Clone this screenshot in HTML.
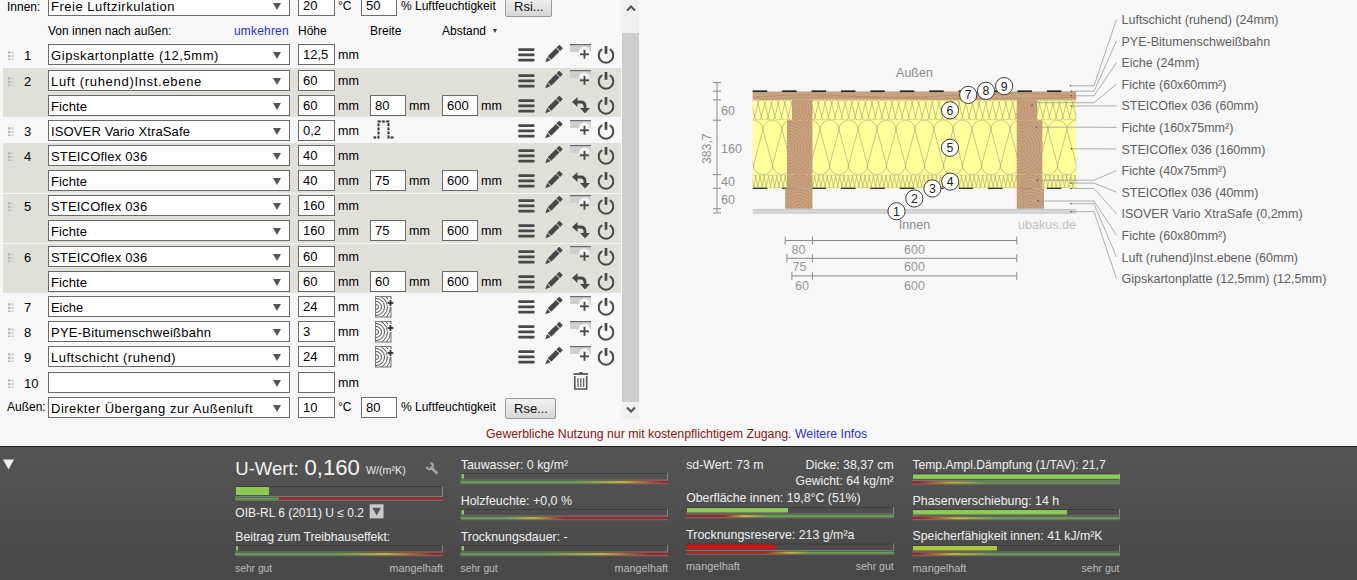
<!DOCTYPE html><html><head><meta charset="utf-8"><style>
*{box-sizing:border-box}
html,body{margin:0;padding:0}
body{width:1357px;height:580px;overflow:hidden;position:relative;background:#f7f7f7;font-family:"Liberation Sans",sans-serif;color:#000}
.a{position:absolute;white-space:nowrap}
.t{position:absolute;white-space:nowrap;font-size:12px;line-height:14px}
.sel{position:absolute;left:48px;width:242px;height:21px;background:#fff;border:1px solid #6b6b6b;font-size:13px;line-height:20px;padding-top:1px;padding-left:2px;white-space:nowrap;overflow:hidden}
.sel:after{content:"";position:absolute;left:224px;top:7px;border-left:4px solid transparent;border-right:4px solid transparent;border-top:7px solid #555}
.inp{position:absolute;height:21px;background:#fff;border:1px solid #6b6b6b;font-size:13px;line-height:19px;padding-left:4px;white-space:nowrap}
.band{position:absolute;left:3px;width:618px;background:#e0dfd8}
.num{position:absolute;font-size:13px;line-height:15px}
.btn{position:absolute;height:21px;border:1px solid #9a9a9a;border-radius:2px;background:linear-gradient(#f2f2f2,#d6d6d6);font-size:13px;line-height:19px;padding-left:8px;color:#111}
.lbl{position:absolute;white-space:nowrap;font-size:12.65px;line-height:14px;color:#5c5c5c}
.pt{position:absolute;white-space:nowrap;color:#efefef;font-size:12.3px;line-height:14px}
.sm{position:absolute;white-space:nowrap;color:#b8b8b8;font-size:10.6px;line-height:12px}
</style></head><body>
<div class="band" style="top:68px;height:49px"></div><div class="band" style="top:143px;height:50px"></div><div class="band" style="top:194px;height:49px"></div><div class="band" style="top:244px;height:49px"></div><div class="t" style="left:7px;top:0px">Innen:</div><div class="sel" style="top:-5px;letter-spacing:0.503px">Freie Luftzirkulation</div><div class="inp" style="left:298px;top:-5px;width:37px">20</div><div class="t" style="left:338px;top:-1px;">°C</div><div class="inp" style="left:361px;top:-5px;width:36px">50</div><div class="t" style="left:401px;top:-1px;">% Luftfeuchtigkeit</div><div class="btn" style="left:505px;top:-4px;width:47px">Rsi...</div><div class="t" style="left:48px;top:24px;">Von innen nach außen:</div><div class="t" style="left:234px;top:24px;color:#2233d8;letter-spacing:0.18px">umkehren</div><div class="t" style="left:298px;top:24px;">Höhe</div><div class="t" style="left:370px;top:24px;">Breite</div><div class="t" style="left:442px;top:24px;">Abstand</div><div class="a" style="left:493px;top:29px;border-left:2.5px solid transparent;border-right:2.5px solid transparent;border-top:4px solid #333"></div><svg class="a" style="left:7px;top:51px" width="8" height="9" viewBox="0 0 8 9"><rect x="1" y="0.3" width="2.5" height="2.2" fill="#b4b4b4"/><rect x="4.5" y="0.3" width="2.5" height="2.2" fill="#d2d2d2"/><rect x="1" y="3.9" width="2.5" height="2.2" fill="#b4b4b4"/><rect x="4.5" y="3.9" width="2.5" height="2.2" fill="#d2d2d2"/><rect x="1" y="7.5" width="2.5" height="2.2" fill="#b4b4b4"/><rect x="4.5" y="7.5" width="2.5" height="2.2" fill="#d2d2d2"/></svg><div class="num" style="left:24px;top:48px">1</div><div class="sel" style="top:44px;letter-spacing:0.565px">Gipskartonplatte (12,5mm)</div><div class="inp" style="left:298px;top:44px;width:37px">12,5</div><div class="t" style="left:338px;top:48px;font-size:12.5px">mm</div><svg class="a" style="left:518px;top:48px" width="17" height="14" viewBox="0 0 17 14"><g fill="#484848"><rect x="0.3" y="0.2" width="16.2" height="2.7" rx="0.8"/><rect x="0.3" y="5.5" width="16.2" height="2.7" rx="0.8"/><rect x="0.3" y="10.8" width="16.2" height="2.7" rx="0.8"/></g></svg><svg class="a" style="left:545px;top:45px" width="18" height="18" viewBox="0 0 18 18"><g transform="translate(0.3 17.2) rotate(-45)" fill="#484848"><path d="M0 0 L5 -2.4 L5 2.4 Z"/><rect x="5.9" y="-2.5" width="11.6" height="5"/><rect x="18.4" y="-2.5" width="3.9" height="5"/></g></svg><svg class="a" style="left:570px;top:44px" width="22" height="16" viewBox="0 0 22 16"><rect x="0" y="0.5" width="21" height="7.5" fill="#cfcfcf"/><rect x="0" y="0" width="21" height="1.2" fill="#6a6a6a"/><path d="M9 8 A5.5 5.5 0 0 1 20 8 Z" fill="#f4f4f4"/><g stroke="#484848" stroke-width="1.8"><line x1="10" y1="10.3" x2="19" y2="10.3"/><line x1="14.5" y1="5.8" x2="14.5" y2="14.8"/></g></svg><svg class="a" style="left:597px;top:45.5px" width="18" height="18" viewBox="0 0 18 18"><path d="M5.2 3.2 A7.3 7.3 0 1 0 12.8 3.2" fill="none" stroke="#484848" stroke-width="2"/><line x1="9" y1="0" x2="9" y2="7.8" stroke="#484848" stroke-width="2.7"/></svg><svg class="a" style="left:7px;top:77px" width="8" height="9" viewBox="0 0 8 9"><rect x="1" y="0.3" width="2.5" height="2.2" fill="#b4b4b4"/><rect x="4.5" y="0.3" width="2.5" height="2.2" fill="#d2d2d2"/><rect x="1" y="3.9" width="2.5" height="2.2" fill="#b4b4b4"/><rect x="4.5" y="3.9" width="2.5" height="2.2" fill="#d2d2d2"/><rect x="1" y="7.5" width="2.5" height="2.2" fill="#b4b4b4"/><rect x="4.5" y="7.5" width="2.5" height="2.2" fill="#d2d2d2"/></svg><div class="num" style="left:24px;top:74px">2</div><div class="sel" style="top:70px;letter-spacing:0.690px">Luft (ruhend)Inst.ebene</div><div class="inp" style="left:298px;top:70px;width:37px">60</div><div class="t" style="left:338px;top:74px;font-size:12.5px">mm</div><svg class="a" style="left:518px;top:74px" width="17" height="14" viewBox="0 0 17 14"><g fill="#484848"><rect x="0.3" y="0.2" width="16.2" height="2.7" rx="0.8"/><rect x="0.3" y="5.5" width="16.2" height="2.7" rx="0.8"/><rect x="0.3" y="10.8" width="16.2" height="2.7" rx="0.8"/></g></svg><svg class="a" style="left:545px;top:71px" width="18" height="18" viewBox="0 0 18 18"><g transform="translate(0.3 17.2) rotate(-45)" fill="#484848"><path d="M0 0 L5 -2.4 L5 2.4 Z"/><rect x="5.9" y="-2.5" width="11.6" height="5"/><rect x="18.4" y="-2.5" width="3.9" height="5"/></g></svg><svg class="a" style="left:570px;top:70px" width="22" height="16" viewBox="0 0 22 16"><rect x="0" y="0.5" width="21" height="7.5" fill="#cfcfcf"/><rect x="0" y="0" width="21" height="1.2" fill="#6a6a6a"/><path d="M9 8 A5.5 5.5 0 0 1 20 8 Z" fill="#f4f4f4"/><g stroke="#484848" stroke-width="1.8"><line x1="10" y1="10.3" x2="19" y2="10.3"/><line x1="14.5" y1="5.8" x2="14.5" y2="14.8"/></g></svg><svg class="a" style="left:597px;top:71.5px" width="18" height="18" viewBox="0 0 18 18"><path d="M5.2 3.2 A7.3 7.3 0 1 0 12.8 3.2" fill="none" stroke="#484848" stroke-width="2"/><line x1="9" y1="0" x2="9" y2="7.8" stroke="#484848" stroke-width="2.7"/></svg><div class="sel" style="top:95px;letter-spacing:0.100px">Fichte</div><div class="inp" style="left:298px;top:95px;width:37px">60</div><div class="t" style="left:338px;top:99px;font-size:12.5px">mm</div><div class="inp" style="left:370px;top:95px;width:36px">80</div><div class="t" style="left:409px;top:99px;font-size:12.5px">mm</div><div class="inp" style="left:442px;top:95px;width:36px">600</div><div class="t" style="left:481px;top:99px;font-size:12.5px">mm</div><svg class="a" style="left:518px;top:99px" width="17" height="14" viewBox="0 0 17 14"><g fill="#484848"><rect x="0.3" y="0.2" width="16.2" height="2.7" rx="0.8"/><rect x="0.3" y="5.5" width="16.2" height="2.7" rx="0.8"/><rect x="0.3" y="10.8" width="16.2" height="2.7" rx="0.8"/></g></svg><svg class="a" style="left:545px;top:96px" width="18" height="18" viewBox="0 0 18 18"><g transform="translate(0.3 17.2) rotate(-45)" fill="#484848"><path d="M0 0 L5 -2.4 L5 2.4 Z"/><rect x="5.9" y="-2.5" width="11.6" height="5"/><rect x="18.4" y="-2.5" width="3.9" height="5"/></g></svg><svg class="a" style="left:572px;top:97px" width="18" height="17" viewBox="0 0 18 17"><path d="M4 5 H8.5 Q13 5 13 9.5 V11.5" fill="none" stroke="#484848" stroke-width="2.8"/><path d="M0 5 L5.5 0 L5.5 10 Z" fill="#484848"/><path d="M8 11 L18 11 L13 16.5 Z" fill="#484848"/></svg><svg class="a" style="left:597px;top:96.5px" width="18" height="18" viewBox="0 0 18 18"><path d="M5.2 3.2 A7.3 7.3 0 1 0 12.8 3.2" fill="none" stroke="#484848" stroke-width="2"/><line x1="9" y1="0" x2="9" y2="7.8" stroke="#484848" stroke-width="2.7"/></svg><svg class="a" style="left:7px;top:127px" width="8" height="9" viewBox="0 0 8 9"><rect x="1" y="0.3" width="2.5" height="2.2" fill="#b4b4b4"/><rect x="4.5" y="0.3" width="2.5" height="2.2" fill="#d2d2d2"/><rect x="1" y="3.9" width="2.5" height="2.2" fill="#b4b4b4"/><rect x="4.5" y="3.9" width="2.5" height="2.2" fill="#d2d2d2"/><rect x="1" y="7.5" width="2.5" height="2.2" fill="#b4b4b4"/><rect x="4.5" y="7.5" width="2.5" height="2.2" fill="#d2d2d2"/></svg><div class="num" style="left:24px;top:124px">3</div><div class="sel" style="top:120px;letter-spacing:0.128px">ISOVER Vario XtraSafe</div><div class="inp" style="left:298px;top:120px;width:37px">0,2</div><div class="t" style="left:338px;top:124px;font-size:12.5px">mm</div><svg class="a" style="left:373px;top:120px" width="22" height="20" viewBox="0 0 22 20"><path d="M0.5 17.5 H5.5 V1.5 H15.5 V17.5 H21" fill="none" stroke="#d0d0d0" stroke-width="1.9"/><path d="M0.5 17.5 H5.5 V1.5 H15.5 V17.5 H21" fill="none" stroke="#303030" stroke-width="1.9" stroke-dasharray="2.6 1.5"/></svg><svg class="a" style="left:518px;top:124px" width="17" height="14" viewBox="0 0 17 14"><g fill="#484848"><rect x="0.3" y="0.2" width="16.2" height="2.7" rx="0.8"/><rect x="0.3" y="5.5" width="16.2" height="2.7" rx="0.8"/><rect x="0.3" y="10.8" width="16.2" height="2.7" rx="0.8"/></g></svg><svg class="a" style="left:545px;top:121px" width="18" height="18" viewBox="0 0 18 18"><g transform="translate(0.3 17.2) rotate(-45)" fill="#484848"><path d="M0 0 L5 -2.4 L5 2.4 Z"/><rect x="5.9" y="-2.5" width="11.6" height="5"/><rect x="18.4" y="-2.5" width="3.9" height="5"/></g></svg><svg class="a" style="left:570px;top:120px" width="22" height="16" viewBox="0 0 22 16"><rect x="0" y="0.5" width="21" height="7.5" fill="#cfcfcf"/><rect x="0" y="0" width="21" height="1.2" fill="#6a6a6a"/><path d="M9 8 A5.5 5.5 0 0 1 20 8 Z" fill="#f4f4f4"/><g stroke="#484848" stroke-width="1.8"><line x1="10" y1="10.3" x2="19" y2="10.3"/><line x1="14.5" y1="5.8" x2="14.5" y2="14.8"/></g></svg><svg class="a" style="left:597px;top:121.5px" width="18" height="18" viewBox="0 0 18 18"><path d="M5.2 3.2 A7.3 7.3 0 1 0 12.8 3.2" fill="none" stroke="#484848" stroke-width="2"/><line x1="9" y1="0" x2="9" y2="7.8" stroke="#484848" stroke-width="2.7"/></svg><svg class="a" style="left:7px;top:152px" width="8" height="9" viewBox="0 0 8 9"><rect x="1" y="0.3" width="2.5" height="2.2" fill="#b4b4b4"/><rect x="4.5" y="0.3" width="2.5" height="2.2" fill="#d2d2d2"/><rect x="1" y="3.9" width="2.5" height="2.2" fill="#b4b4b4"/><rect x="4.5" y="3.9" width="2.5" height="2.2" fill="#d2d2d2"/><rect x="1" y="7.5" width="2.5" height="2.2" fill="#b4b4b4"/><rect x="4.5" y="7.5" width="2.5" height="2.2" fill="#d2d2d2"/></svg><div class="num" style="left:24px;top:149px">4</div><div class="sel" style="top:145px;letter-spacing:0.177px">STEICOflex 036</div><div class="inp" style="left:298px;top:145px;width:37px">40</div><div class="t" style="left:338px;top:149px;font-size:12.5px">mm</div><svg class="a" style="left:518px;top:149px" width="17" height="14" viewBox="0 0 17 14"><g fill="#484848"><rect x="0.3" y="0.2" width="16.2" height="2.7" rx="0.8"/><rect x="0.3" y="5.5" width="16.2" height="2.7" rx="0.8"/><rect x="0.3" y="10.8" width="16.2" height="2.7" rx="0.8"/></g></svg><svg class="a" style="left:545px;top:146px" width="18" height="18" viewBox="0 0 18 18"><g transform="translate(0.3 17.2) rotate(-45)" fill="#484848"><path d="M0 0 L5 -2.4 L5 2.4 Z"/><rect x="5.9" y="-2.5" width="11.6" height="5"/><rect x="18.4" y="-2.5" width="3.9" height="5"/></g></svg><svg class="a" style="left:570px;top:145px" width="22" height="16" viewBox="0 0 22 16"><rect x="0" y="0.5" width="21" height="7.5" fill="#cfcfcf"/><rect x="0" y="0" width="21" height="1.2" fill="#6a6a6a"/><path d="M9 8 A5.5 5.5 0 0 1 20 8 Z" fill="#f4f4f4"/><g stroke="#484848" stroke-width="1.8"><line x1="10" y1="10.3" x2="19" y2="10.3"/><line x1="14.5" y1="5.8" x2="14.5" y2="14.8"/></g></svg><svg class="a" style="left:597px;top:146.5px" width="18" height="18" viewBox="0 0 18 18"><path d="M5.2 3.2 A7.3 7.3 0 1 0 12.8 3.2" fill="none" stroke="#484848" stroke-width="2"/><line x1="9" y1="0" x2="9" y2="7.8" stroke="#484848" stroke-width="2.7"/></svg><div class="sel" style="top:170px;letter-spacing:0.100px">Fichte</div><div class="inp" style="left:298px;top:170px;width:37px">40</div><div class="t" style="left:338px;top:174px;font-size:12.5px">mm</div><div class="inp" style="left:370px;top:170px;width:36px">75</div><div class="t" style="left:409px;top:174px;font-size:12.5px">mm</div><div class="inp" style="left:442px;top:170px;width:36px">600</div><div class="t" style="left:481px;top:174px;font-size:12.5px">mm</div><svg class="a" style="left:518px;top:174px" width="17" height="14" viewBox="0 0 17 14"><g fill="#484848"><rect x="0.3" y="0.2" width="16.2" height="2.7" rx="0.8"/><rect x="0.3" y="5.5" width="16.2" height="2.7" rx="0.8"/><rect x="0.3" y="10.8" width="16.2" height="2.7" rx="0.8"/></g></svg><svg class="a" style="left:545px;top:171px" width="18" height="18" viewBox="0 0 18 18"><g transform="translate(0.3 17.2) rotate(-45)" fill="#484848"><path d="M0 0 L5 -2.4 L5 2.4 Z"/><rect x="5.9" y="-2.5" width="11.6" height="5"/><rect x="18.4" y="-2.5" width="3.9" height="5"/></g></svg><svg class="a" style="left:572px;top:172px" width="18" height="17" viewBox="0 0 18 17"><path d="M4 5 H8.5 Q13 5 13 9.5 V11.5" fill="none" stroke="#484848" stroke-width="2.8"/><path d="M0 5 L5.5 0 L5.5 10 Z" fill="#484848"/><path d="M8 11 L18 11 L13 16.5 Z" fill="#484848"/></svg><svg class="a" style="left:597px;top:171.5px" width="18" height="18" viewBox="0 0 18 18"><path d="M5.2 3.2 A7.3 7.3 0 1 0 12.8 3.2" fill="none" stroke="#484848" stroke-width="2"/><line x1="9" y1="0" x2="9" y2="7.8" stroke="#484848" stroke-width="2.7"/></svg><svg class="a" style="left:7px;top:202px" width="8" height="9" viewBox="0 0 8 9"><rect x="1" y="0.3" width="2.5" height="2.2" fill="#b4b4b4"/><rect x="4.5" y="0.3" width="2.5" height="2.2" fill="#d2d2d2"/><rect x="1" y="3.9" width="2.5" height="2.2" fill="#b4b4b4"/><rect x="4.5" y="3.9" width="2.5" height="2.2" fill="#d2d2d2"/><rect x="1" y="7.5" width="2.5" height="2.2" fill="#b4b4b4"/><rect x="4.5" y="7.5" width="2.5" height="2.2" fill="#d2d2d2"/></svg><div class="num" style="left:24px;top:199px">5</div><div class="sel" style="top:195px;letter-spacing:0.177px">STEICOflex 036</div><div class="inp" style="left:298px;top:195px;width:37px">160</div><div class="t" style="left:338px;top:199px;font-size:12.5px">mm</div><svg class="a" style="left:518px;top:199px" width="17" height="14" viewBox="0 0 17 14"><g fill="#484848"><rect x="0.3" y="0.2" width="16.2" height="2.7" rx="0.8"/><rect x="0.3" y="5.5" width="16.2" height="2.7" rx="0.8"/><rect x="0.3" y="10.8" width="16.2" height="2.7" rx="0.8"/></g></svg><svg class="a" style="left:545px;top:196px" width="18" height="18" viewBox="0 0 18 18"><g transform="translate(0.3 17.2) rotate(-45)" fill="#484848"><path d="M0 0 L5 -2.4 L5 2.4 Z"/><rect x="5.9" y="-2.5" width="11.6" height="5"/><rect x="18.4" y="-2.5" width="3.9" height="5"/></g></svg><svg class="a" style="left:570px;top:195px" width="22" height="16" viewBox="0 0 22 16"><rect x="0" y="0.5" width="21" height="7.5" fill="#cfcfcf"/><rect x="0" y="0" width="21" height="1.2" fill="#6a6a6a"/><path d="M9 8 A5.5 5.5 0 0 1 20 8 Z" fill="#f4f4f4"/><g stroke="#484848" stroke-width="1.8"><line x1="10" y1="10.3" x2="19" y2="10.3"/><line x1="14.5" y1="5.8" x2="14.5" y2="14.8"/></g></svg><svg class="a" style="left:597px;top:196.5px" width="18" height="18" viewBox="0 0 18 18"><path d="M5.2 3.2 A7.3 7.3 0 1 0 12.8 3.2" fill="none" stroke="#484848" stroke-width="2"/><line x1="9" y1="0" x2="9" y2="7.8" stroke="#484848" stroke-width="2.7"/></svg><div class="sel" style="top:220px;letter-spacing:0.100px">Fichte</div><div class="inp" style="left:298px;top:220px;width:37px">160</div><div class="t" style="left:338px;top:224px;font-size:12.5px">mm</div><div class="inp" style="left:370px;top:220px;width:36px">75</div><div class="t" style="left:409px;top:224px;font-size:12.5px">mm</div><div class="inp" style="left:442px;top:220px;width:36px">600</div><div class="t" style="left:481px;top:224px;font-size:12.5px">mm</div><svg class="a" style="left:518px;top:224px" width="17" height="14" viewBox="0 0 17 14"><g fill="#484848"><rect x="0.3" y="0.2" width="16.2" height="2.7" rx="0.8"/><rect x="0.3" y="5.5" width="16.2" height="2.7" rx="0.8"/><rect x="0.3" y="10.8" width="16.2" height="2.7" rx="0.8"/></g></svg><svg class="a" style="left:545px;top:221px" width="18" height="18" viewBox="0 0 18 18"><g transform="translate(0.3 17.2) rotate(-45)" fill="#484848"><path d="M0 0 L5 -2.4 L5 2.4 Z"/><rect x="5.9" y="-2.5" width="11.6" height="5"/><rect x="18.4" y="-2.5" width="3.9" height="5"/></g></svg><svg class="a" style="left:572px;top:222px" width="18" height="17" viewBox="0 0 18 17"><path d="M4 5 H8.5 Q13 5 13 9.5 V11.5" fill="none" stroke="#484848" stroke-width="2.8"/><path d="M0 5 L5.5 0 L5.5 10 Z" fill="#484848"/><path d="M8 11 L18 11 L13 16.5 Z" fill="#484848"/></svg><svg class="a" style="left:597px;top:221.5px" width="18" height="18" viewBox="0 0 18 18"><path d="M5.2 3.2 A7.3 7.3 0 1 0 12.8 3.2" fill="none" stroke="#484848" stroke-width="2"/><line x1="9" y1="0" x2="9" y2="7.8" stroke="#484848" stroke-width="2.7"/></svg><svg class="a" style="left:7px;top:253px" width="8" height="9" viewBox="0 0 8 9"><rect x="1" y="0.3" width="2.5" height="2.2" fill="#b4b4b4"/><rect x="4.5" y="0.3" width="2.5" height="2.2" fill="#d2d2d2"/><rect x="1" y="3.9" width="2.5" height="2.2" fill="#b4b4b4"/><rect x="4.5" y="3.9" width="2.5" height="2.2" fill="#d2d2d2"/><rect x="1" y="7.5" width="2.5" height="2.2" fill="#b4b4b4"/><rect x="4.5" y="7.5" width="2.5" height="2.2" fill="#d2d2d2"/></svg><div class="num" style="left:24px;top:250px">6</div><div class="sel" style="top:246px;letter-spacing:0.177px">STEICOflex 036</div><div class="inp" style="left:298px;top:246px;width:37px">60</div><div class="t" style="left:338px;top:250px;font-size:12.5px">mm</div><svg class="a" style="left:518px;top:250px" width="17" height="14" viewBox="0 0 17 14"><g fill="#484848"><rect x="0.3" y="0.2" width="16.2" height="2.7" rx="0.8"/><rect x="0.3" y="5.5" width="16.2" height="2.7" rx="0.8"/><rect x="0.3" y="10.8" width="16.2" height="2.7" rx="0.8"/></g></svg><svg class="a" style="left:545px;top:247px" width="18" height="18" viewBox="0 0 18 18"><g transform="translate(0.3 17.2) rotate(-45)" fill="#484848"><path d="M0 0 L5 -2.4 L5 2.4 Z"/><rect x="5.9" y="-2.5" width="11.6" height="5"/><rect x="18.4" y="-2.5" width="3.9" height="5"/></g></svg><svg class="a" style="left:570px;top:246px" width="22" height="16" viewBox="0 0 22 16"><rect x="0" y="0.5" width="21" height="7.5" fill="#cfcfcf"/><rect x="0" y="0" width="21" height="1.2" fill="#6a6a6a"/><path d="M9 8 A5.5 5.5 0 0 1 20 8 Z" fill="#f4f4f4"/><g stroke="#484848" stroke-width="1.8"><line x1="10" y1="10.3" x2="19" y2="10.3"/><line x1="14.5" y1="5.8" x2="14.5" y2="14.8"/></g></svg><svg class="a" style="left:597px;top:247.5px" width="18" height="18" viewBox="0 0 18 18"><path d="M5.2 3.2 A7.3 7.3 0 1 0 12.8 3.2" fill="none" stroke="#484848" stroke-width="2"/><line x1="9" y1="0" x2="9" y2="7.8" stroke="#484848" stroke-width="2.7"/></svg><div class="sel" style="top:271px;letter-spacing:0.100px">Fichte</div><div class="inp" style="left:298px;top:271px;width:37px">60</div><div class="t" style="left:338px;top:275px;font-size:12.5px">mm</div><div class="inp" style="left:370px;top:271px;width:36px">60</div><div class="t" style="left:409px;top:275px;font-size:12.5px">mm</div><div class="inp" style="left:442px;top:271px;width:36px">600</div><div class="t" style="left:481px;top:275px;font-size:12.5px">mm</div><svg class="a" style="left:518px;top:275px" width="17" height="14" viewBox="0 0 17 14"><g fill="#484848"><rect x="0.3" y="0.2" width="16.2" height="2.7" rx="0.8"/><rect x="0.3" y="5.5" width="16.2" height="2.7" rx="0.8"/><rect x="0.3" y="10.8" width="16.2" height="2.7" rx="0.8"/></g></svg><svg class="a" style="left:545px;top:272px" width="18" height="18" viewBox="0 0 18 18"><g transform="translate(0.3 17.2) rotate(-45)" fill="#484848"><path d="M0 0 L5 -2.4 L5 2.4 Z"/><rect x="5.9" y="-2.5" width="11.6" height="5"/><rect x="18.4" y="-2.5" width="3.9" height="5"/></g></svg><svg class="a" style="left:572px;top:273px" width="18" height="17" viewBox="0 0 18 17"><path d="M4 5 H8.5 Q13 5 13 9.5 V11.5" fill="none" stroke="#484848" stroke-width="2.8"/><path d="M0 5 L5.5 0 L5.5 10 Z" fill="#484848"/><path d="M8 11 L18 11 L13 16.5 Z" fill="#484848"/></svg><svg class="a" style="left:597px;top:272.5px" width="18" height="18" viewBox="0 0 18 18"><path d="M5.2 3.2 A7.3 7.3 0 1 0 12.8 3.2" fill="none" stroke="#484848" stroke-width="2"/><line x1="9" y1="0" x2="9" y2="7.8" stroke="#484848" stroke-width="2.7"/></svg><svg class="a" style="left:7px;top:303px" width="8" height="9" viewBox="0 0 8 9"><rect x="1" y="0.3" width="2.5" height="2.2" fill="#b4b4b4"/><rect x="4.5" y="0.3" width="2.5" height="2.2" fill="#d2d2d2"/><rect x="1" y="3.9" width="2.5" height="2.2" fill="#b4b4b4"/><rect x="4.5" y="3.9" width="2.5" height="2.2" fill="#d2d2d2"/><rect x="1" y="7.5" width="2.5" height="2.2" fill="#b4b4b4"/><rect x="4.5" y="7.5" width="2.5" height="2.2" fill="#d2d2d2"/></svg><div class="num" style="left:24px;top:300px">7</div><div class="sel" style="top:296px;letter-spacing:-0.064px">Eiche</div><div class="inp" style="left:298px;top:296px;width:37px">24</div><div class="t" style="left:338px;top:300px;font-size:12.5px">mm</div><svg class="a" style="left:375px;top:296px" width="20" height="22" viewBox="0 0 20 22"><defs><clipPath id="wc296"><rect x="0.5" y="0.5" width="15.5" height="20.5"/></clipPath></defs><g clip-path="url(#wc296)" fill="none" stroke="#555" stroke-width="1"><circle cx="1" cy="11" r="2.5"/><circle cx="1" cy="11" r="5.5"/><circle cx="1" cy="11" r="8.5"/><circle cx="1" cy="11" r="11.5"/><circle cx="1" cy="11" r="14.5"/><circle cx="1" cy="11" r="17.5"/><circle cx="1" cy="11" r="20.5"/></g><rect x="0.5" y="0.5" width="15.5" height="20.5" fill="none" stroke="#777" stroke-width="1" stroke-dasharray="0 0"/><rect x="12.5" y="3" width="7.5" height="8" fill="#f7f7f7"/><g stroke="#333" stroke-width="1.8"><line x1="12.6" y1="7" x2="18.4" y2="7"/><line x1="15.5" y1="4.1" x2="15.5" y2="9.9"/></g></svg><svg class="a" style="left:518px;top:300px" width="17" height="14" viewBox="0 0 17 14"><g fill="#484848"><rect x="0.3" y="0.2" width="16.2" height="2.7" rx="0.8"/><rect x="0.3" y="5.5" width="16.2" height="2.7" rx="0.8"/><rect x="0.3" y="10.8" width="16.2" height="2.7" rx="0.8"/></g></svg><svg class="a" style="left:545px;top:297px" width="18" height="18" viewBox="0 0 18 18"><g transform="translate(0.3 17.2) rotate(-45)" fill="#484848"><path d="M0 0 L5 -2.4 L5 2.4 Z"/><rect x="5.9" y="-2.5" width="11.6" height="5"/><rect x="18.4" y="-2.5" width="3.9" height="5"/></g></svg><svg class="a" style="left:570px;top:296px" width="22" height="16" viewBox="0 0 22 16"><rect x="0" y="0.5" width="21" height="7.5" fill="#cfcfcf"/><rect x="0" y="0" width="21" height="1.2" fill="#6a6a6a"/><path d="M9 8 A5.5 5.5 0 0 1 20 8 Z" fill="#f4f4f4"/><g stroke="#484848" stroke-width="1.8"><line x1="10" y1="10.3" x2="19" y2="10.3"/><line x1="14.5" y1="5.8" x2="14.5" y2="14.8"/></g></svg><svg class="a" style="left:597px;top:297.5px" width="18" height="18" viewBox="0 0 18 18"><path d="M5.2 3.2 A7.3 7.3 0 1 0 12.8 3.2" fill="none" stroke="#484848" stroke-width="2"/><line x1="9" y1="0" x2="9" y2="7.8" stroke="#484848" stroke-width="2.7"/></svg><svg class="a" style="left:7px;top:328px" width="8" height="9" viewBox="0 0 8 9"><rect x="1" y="0.3" width="2.5" height="2.2" fill="#b4b4b4"/><rect x="4.5" y="0.3" width="2.5" height="2.2" fill="#d2d2d2"/><rect x="1" y="3.9" width="2.5" height="2.2" fill="#b4b4b4"/><rect x="4.5" y="3.9" width="2.5" height="2.2" fill="#d2d2d2"/><rect x="1" y="7.5" width="2.5" height="2.2" fill="#b4b4b4"/><rect x="4.5" y="7.5" width="2.5" height="2.2" fill="#d2d2d2"/></svg><div class="num" style="left:24px;top:325px">8</div><div class="sel" style="top:321px;letter-spacing:0.254px">PYE-Bitumenschweißbahn</div><div class="inp" style="left:298px;top:321px;width:37px">3</div><div class="t" style="left:338px;top:325px;font-size:12.5px">mm</div><svg class="a" style="left:375px;top:321px" width="20" height="22" viewBox="0 0 20 22"><defs><clipPath id="wc321"><rect x="0.5" y="0.5" width="15.5" height="20.5"/></clipPath></defs><g clip-path="url(#wc321)" fill="none" stroke="#555" stroke-width="1"><circle cx="1" cy="11" r="2.5"/><circle cx="1" cy="11" r="5.5"/><circle cx="1" cy="11" r="8.5"/><circle cx="1" cy="11" r="11.5"/><circle cx="1" cy="11" r="14.5"/><circle cx="1" cy="11" r="17.5"/><circle cx="1" cy="11" r="20.5"/></g><rect x="0.5" y="0.5" width="15.5" height="20.5" fill="none" stroke="#777" stroke-width="1" stroke-dasharray="0 0"/><rect x="12.5" y="3" width="7.5" height="8" fill="#f7f7f7"/><g stroke="#333" stroke-width="1.8"><line x1="12.6" y1="7" x2="18.4" y2="7"/><line x1="15.5" y1="4.1" x2="15.5" y2="9.9"/></g></svg><svg class="a" style="left:518px;top:325px" width="17" height="14" viewBox="0 0 17 14"><g fill="#484848"><rect x="0.3" y="0.2" width="16.2" height="2.7" rx="0.8"/><rect x="0.3" y="5.5" width="16.2" height="2.7" rx="0.8"/><rect x="0.3" y="10.8" width="16.2" height="2.7" rx="0.8"/></g></svg><svg class="a" style="left:545px;top:322px" width="18" height="18" viewBox="0 0 18 18"><g transform="translate(0.3 17.2) rotate(-45)" fill="#484848"><path d="M0 0 L5 -2.4 L5 2.4 Z"/><rect x="5.9" y="-2.5" width="11.6" height="5"/><rect x="18.4" y="-2.5" width="3.9" height="5"/></g></svg><svg class="a" style="left:570px;top:321px" width="22" height="16" viewBox="0 0 22 16"><rect x="0" y="0.5" width="21" height="7.5" fill="#cfcfcf"/><rect x="0" y="0" width="21" height="1.2" fill="#6a6a6a"/><path d="M9 8 A5.5 5.5 0 0 1 20 8 Z" fill="#f4f4f4"/><g stroke="#484848" stroke-width="1.8"><line x1="10" y1="10.3" x2="19" y2="10.3"/><line x1="14.5" y1="5.8" x2="14.5" y2="14.8"/></g></svg><svg class="a" style="left:597px;top:322.5px" width="18" height="18" viewBox="0 0 18 18"><path d="M5.2 3.2 A7.3 7.3 0 1 0 12.8 3.2" fill="none" stroke="#484848" stroke-width="2"/><line x1="9" y1="0" x2="9" y2="7.8" stroke="#484848" stroke-width="2.7"/></svg><svg class="a" style="left:7px;top:353px" width="8" height="9" viewBox="0 0 8 9"><rect x="1" y="0.3" width="2.5" height="2.2" fill="#b4b4b4"/><rect x="4.5" y="0.3" width="2.5" height="2.2" fill="#d2d2d2"/><rect x="1" y="3.9" width="2.5" height="2.2" fill="#b4b4b4"/><rect x="4.5" y="3.9" width="2.5" height="2.2" fill="#d2d2d2"/><rect x="1" y="7.5" width="2.5" height="2.2" fill="#b4b4b4"/><rect x="4.5" y="7.5" width="2.5" height="2.2" fill="#d2d2d2"/></svg><div class="num" style="left:24px;top:350px">9</div><div class="sel" style="top:346px;letter-spacing:0.516px">Luftschicht (ruhend)</div><div class="inp" style="left:298px;top:346px;width:37px">24</div><div class="t" style="left:338px;top:350px;font-size:12.5px">mm</div><svg class="a" style="left:375px;top:346px" width="20" height="22" viewBox="0 0 20 22"><defs><clipPath id="wc346"><rect x="0.5" y="0.5" width="15.5" height="20.5"/></clipPath></defs><g clip-path="url(#wc346)" fill="none" stroke="#555" stroke-width="1"><circle cx="1" cy="11" r="2.5"/><circle cx="1" cy="11" r="5.5"/><circle cx="1" cy="11" r="8.5"/><circle cx="1" cy="11" r="11.5"/><circle cx="1" cy="11" r="14.5"/><circle cx="1" cy="11" r="17.5"/><circle cx="1" cy="11" r="20.5"/></g><rect x="0.5" y="0.5" width="15.5" height="20.5" fill="none" stroke="#777" stroke-width="1" stroke-dasharray="0 0"/><rect x="12.5" y="3" width="7.5" height="8" fill="#f7f7f7"/><g stroke="#333" stroke-width="1.8"><line x1="12.6" y1="7" x2="18.4" y2="7"/><line x1="15.5" y1="4.1" x2="15.5" y2="9.9"/></g></svg><svg class="a" style="left:518px;top:350px" width="17" height="14" viewBox="0 0 17 14"><g fill="#484848"><rect x="0.3" y="0.2" width="16.2" height="2.7" rx="0.8"/><rect x="0.3" y="5.5" width="16.2" height="2.7" rx="0.8"/><rect x="0.3" y="10.8" width="16.2" height="2.7" rx="0.8"/></g></svg><svg class="a" style="left:545px;top:347px" width="18" height="18" viewBox="0 0 18 18"><g transform="translate(0.3 17.2) rotate(-45)" fill="#484848"><path d="M0 0 L5 -2.4 L5 2.4 Z"/><rect x="5.9" y="-2.5" width="11.6" height="5"/><rect x="18.4" y="-2.5" width="3.9" height="5"/></g></svg><svg class="a" style="left:570px;top:346px" width="22" height="16" viewBox="0 0 22 16"><rect x="0" y="0.5" width="21" height="7.5" fill="#cfcfcf"/><rect x="0" y="0" width="21" height="1.2" fill="#6a6a6a"/><path d="M9 8 A5.5 5.5 0 0 1 20 8 Z" fill="#f4f4f4"/><g stroke="#484848" stroke-width="1.8"><line x1="10" y1="10.3" x2="19" y2="10.3"/><line x1="14.5" y1="5.8" x2="14.5" y2="14.8"/></g></svg><svg class="a" style="left:597px;top:347.5px" width="18" height="18" viewBox="0 0 18 18"><path d="M5.2 3.2 A7.3 7.3 0 1 0 12.8 3.2" fill="none" stroke="#484848" stroke-width="2"/><line x1="9" y1="0" x2="9" y2="7.8" stroke="#484848" stroke-width="2.7"/></svg><svg class="a" style="left:7px;top:379px" width="8" height="9" viewBox="0 0 8 9"><rect x="1" y="0.3" width="2.5" height="2.2" fill="#b4b4b4"/><rect x="4.5" y="0.3" width="2.5" height="2.2" fill="#d2d2d2"/><rect x="1" y="3.9" width="2.5" height="2.2" fill="#b4b4b4"/><rect x="4.5" y="3.9" width="2.5" height="2.2" fill="#d2d2d2"/><rect x="1" y="7.5" width="2.5" height="2.2" fill="#b4b4b4"/><rect x="4.5" y="7.5" width="2.5" height="2.2" fill="#d2d2d2"/></svg><div class="num" style="left:24px;top:376px">10</div><div class="sel" style="top:372px;letter-spacing:0.000px"></div><div class="inp" style="left:298px;top:372px;width:37px"></div><div class="t" style="left:338px;top:376px;font-size:12.5px">mm</div><svg class="a" style="left:573px;top:372px" width="16" height="18" viewBox="0 0 16 18"><path d="M0.5 2 H15" stroke="#555" stroke-width="1.8"/><path d="M6 1 H10" stroke="#555" stroke-width="1.6"/><path d="M1.8 4 V17 H13.7 V4" fill="none" stroke="#555" stroke-width="1.6"/><g stroke="#666" stroke-width="1.3"><line x1="5" y1="6" x2="5" y2="15"/><line x1="7.8" y1="6" x2="7.8" y2="15"/><line x1="10.6" y1="6" x2="10.6" y2="15"/></g></svg><div class="t" style="left:7px;top:400px;">Außen:</div><div class="sel" style="top:397px;letter-spacing:0.503px">Direkter Übergang zur Außenluft</div><div class="inp" style="left:298px;top:397px;width:37px">10</div><div class="t" style="left:338px;top:400px;">°C</div><div class="inp" style="left:361px;top:397px;width:36px">80</div><div class="t" style="left:401px;top:400px;">% Luftfeuchtigkeit</div><div class="btn" style="left:505px;top:398px;width:51px">Rse...</div><div class="a" style="left:622px;top:0;width:17px;height:419px;background:#f0f0f0"></div><div class="a" style="left:622px;top:33px;width:17px;height:369px;background:#cdcdcd"></div><svg class="a" style="left:626px;top:4px" width="10" height="8" viewBox="0 0 10 8"><path d="M1 6.5 L5 2.5 L9 6.5" fill="none" stroke="#505050" stroke-width="2"/></svg><svg class="a" style="left:626px;top:406px" width="10" height="8" viewBox="0 0 10 8"><path d="M1 1.5 L5 5.5 L9 1.5" fill="none" stroke="#505050" stroke-width="2"/></svg><div class="t" style="left:486px;top:427px;font-size:12.3px;color:#8b1515">Gewerbliche Nutzung nur mit kostenpflichtigem Zugang. <span style="color:#3030c8">Weitere Infos</span></div><svg class="a" style="left:640px;top:0px" width="717" height="446" viewBox="640 0 717 446" font-family="Liberation Sans, sans-serif"><defs><clipPath id="cl60"><rect x="752.7" y="99.83999999999999" width="323.5" height="20.400000000000006"/></clipPath><clipPath id="cl160"><rect x="752.7" y="120.24" width="323.5" height="54.39999999999999"/></clipPath><clipPath id="cl40"><rect x="752.7" y="174.64" width="323.5" height="13.599999999999994"/></clipPath></defs><rect x="752.7" y="99.83999999999999" width="323.5" height="88.39999999999999" fill="#ffff9c"/><path clip-path="url(#cl60)" d="M744.65 103.19A3.35 3.35 0 0 1 751.35 103.19M748.00 116.89A3.35 3.35 0 0 0 754.70 116.89M748.00 116.89L751.35 103.19L754.70 116.89M751.35 103.19A3.35 3.35 0 0 1 758.05 103.19M754.70 116.89A3.35 3.35 0 0 0 761.40 116.89M754.70 116.89L758.05 103.19L761.40 116.89M758.05 103.19A3.35 3.35 0 0 1 764.75 103.19M761.40 116.89A3.35 3.35 0 0 0 768.10 116.89M761.40 116.89L764.75 103.19L768.10 116.89M764.75 103.19A3.35 3.35 0 0 1 771.45 103.19M768.10 116.89A3.35 3.35 0 0 0 774.80 116.89M768.10 116.89L771.45 103.19L774.80 116.89M771.45 103.19A3.35 3.35 0 0 1 778.15 103.19M774.80 116.89A3.35 3.35 0 0 0 781.50 116.89M774.80 116.89L778.15 103.19L781.50 116.89M778.15 103.19A3.35 3.35 0 0 1 784.85 103.19M781.50 116.89A3.35 3.35 0 0 0 788.20 116.89M781.50 116.89L784.85 103.19L788.20 116.89M784.85 103.19A3.35 3.35 0 0 1 791.55 103.19M788.20 116.89A3.35 3.35 0 0 0 794.90 116.89M788.20 116.89L791.55 103.19L794.90 116.89M791.55 103.19A3.35 3.35 0 0 1 798.25 103.19M794.90 116.89A3.35 3.35 0 0 0 801.60 116.89M794.90 116.89L798.25 103.19L801.60 116.89M798.25 103.19A3.35 3.35 0 0 1 804.95 103.19M801.60 116.89A3.35 3.35 0 0 0 808.30 116.89M801.60 116.89L804.95 103.19L808.30 116.89M804.95 103.19A3.35 3.35 0 0 1 811.65 103.19M808.30 116.89A3.35 3.35 0 0 0 815.00 116.89M808.30 116.89L811.65 103.19L815.00 116.89M811.65 103.19A3.35 3.35 0 0 1 818.35 103.19M815.00 116.89A3.35 3.35 0 0 0 821.70 116.89M815.00 116.89L818.35 103.19L821.70 116.89M818.35 103.19A3.35 3.35 0 0 1 825.05 103.19M821.70 116.89A3.35 3.35 0 0 0 828.40 116.89M821.70 116.89L825.05 103.19L828.40 116.89M825.05 103.19A3.35 3.35 0 0 1 831.75 103.19M828.40 116.89A3.35 3.35 0 0 0 835.10 116.89M828.40 116.89L831.75 103.19L835.10 116.89M831.75 103.19A3.35 3.35 0 0 1 838.45 103.19M835.10 116.89A3.35 3.35 0 0 0 841.80 116.89M835.10 116.89L838.45 103.19L841.80 116.89M838.45 103.19A3.35 3.35 0 0 1 845.15 103.19M841.80 116.89A3.35 3.35 0 0 0 848.50 116.89M841.80 116.89L845.15 103.19L848.50 116.89M845.15 103.19A3.35 3.35 0 0 1 851.85 103.19M848.50 116.89A3.35 3.35 0 0 0 855.20 116.89M848.50 116.89L851.85 103.19L855.20 116.89M851.85 103.19A3.35 3.35 0 0 1 858.55 103.19M855.20 116.89A3.35 3.35 0 0 0 861.90 116.89M855.20 116.89L858.55 103.19L861.90 116.89M858.55 103.19A3.35 3.35 0 0 1 865.25 103.19M861.90 116.89A3.35 3.35 0 0 0 868.60 116.89M861.90 116.89L865.25 103.19L868.60 116.89M865.25 103.19A3.35 3.35 0 0 1 871.95 103.19M868.60 116.89A3.35 3.35 0 0 0 875.30 116.89M868.60 116.89L871.95 103.19L875.30 116.89M871.95 103.19A3.35 3.35 0 0 1 878.65 103.19M875.30 116.89A3.35 3.35 0 0 0 882.00 116.89M875.30 116.89L878.65 103.19L882.00 116.89M878.65 103.19A3.35 3.35 0 0 1 885.35 103.19M882.00 116.89A3.35 3.35 0 0 0 888.70 116.89M882.00 116.89L885.35 103.19L888.70 116.89M885.35 103.19A3.35 3.35 0 0 1 892.05 103.19M888.70 116.89A3.35 3.35 0 0 0 895.40 116.89M888.70 116.89L892.05 103.19L895.40 116.89M892.05 103.19A3.35 3.35 0 0 1 898.75 103.19M895.40 116.89A3.35 3.35 0 0 0 902.10 116.89M895.40 116.89L898.75 103.19L902.10 116.89M898.75 103.19A3.35 3.35 0 0 1 905.45 103.19M902.10 116.89A3.35 3.35 0 0 0 908.80 116.89M902.10 116.89L905.45 103.19L908.80 116.89M905.45 103.19A3.35 3.35 0 0 1 912.15 103.19M908.80 116.89A3.35 3.35 0 0 0 915.50 116.89M908.80 116.89L912.15 103.19L915.50 116.89M912.15 103.19A3.35 3.35 0 0 1 918.85 103.19M915.50 116.89A3.35 3.35 0 0 0 922.20 116.89M915.50 116.89L918.85 103.19L922.20 116.89M918.85 103.19A3.35 3.35 0 0 1 925.55 103.19M922.20 116.89A3.35 3.35 0 0 0 928.90 116.89M922.20 116.89L925.55 103.19L928.90 116.89M925.55 103.19A3.35 3.35 0 0 1 932.25 103.19M928.90 116.89A3.35 3.35 0 0 0 935.60 116.89M928.90 116.89L932.25 103.19L935.60 116.89M932.25 103.19A3.35 3.35 0 0 1 938.95 103.19M935.60 116.89A3.35 3.35 0 0 0 942.30 116.89M935.60 116.89L938.95 103.19L942.30 116.89M938.95 103.19A3.35 3.35 0 0 1 945.65 103.19M942.30 116.89A3.35 3.35 0 0 0 949.00 116.89M942.30 116.89L945.65 103.19L949.00 116.89M945.65 103.19A3.35 3.35 0 0 1 952.35 103.19M949.00 116.89A3.35 3.35 0 0 0 955.70 116.89M949.00 116.89L952.35 103.19L955.70 116.89M952.35 103.19A3.35 3.35 0 0 1 959.05 103.19M955.70 116.89A3.35 3.35 0 0 0 962.40 116.89M955.70 116.89L959.05 103.19L962.40 116.89M959.05 103.19A3.35 3.35 0 0 1 965.75 103.19M962.40 116.89A3.35 3.35 0 0 0 969.10 116.89M962.40 116.89L965.75 103.19L969.10 116.89M965.75 103.19A3.35 3.35 0 0 1 972.45 103.19M969.10 116.89A3.35 3.35 0 0 0 975.80 116.89M969.10 116.89L972.45 103.19L975.80 116.89M972.45 103.19A3.35 3.35 0 0 1 979.15 103.19M975.80 116.89A3.35 3.35 0 0 0 982.50 116.89M975.80 116.89L979.15 103.19L982.50 116.89M979.15 103.19A3.35 3.35 0 0 1 985.85 103.19M982.50 116.89A3.35 3.35 0 0 0 989.20 116.89M982.50 116.89L985.85 103.19L989.20 116.89M985.85 103.19A3.35 3.35 0 0 1 992.55 103.19M989.20 116.89A3.35 3.35 0 0 0 995.90 116.89M989.20 116.89L992.55 103.19L995.90 116.89M992.55 103.19A3.35 3.35 0 0 1 999.25 103.19M995.90 116.89A3.35 3.35 0 0 0 1002.60 116.89M995.90 116.89L999.25 103.19L1002.60 116.89M999.25 103.19A3.35 3.35 0 0 1 1005.95 103.19M1002.60 116.89A3.35 3.35 0 0 0 1009.30 116.89M1002.60 116.89L1005.95 103.19L1009.30 116.89M1005.95 103.19A3.35 3.35 0 0 1 1012.65 103.19M1009.30 116.89A3.35 3.35 0 0 0 1016.00 116.89M1009.30 116.89L1012.65 103.19L1016.00 116.89M1012.65 103.19A3.35 3.35 0 0 1 1019.35 103.19M1016.00 116.89A3.35 3.35 0 0 0 1022.70 116.89M1016.00 116.89L1019.35 103.19L1022.70 116.89M1019.35 103.19A3.35 3.35 0 0 1 1026.05 103.19M1022.70 116.89A3.35 3.35 0 0 0 1029.40 116.89M1022.70 116.89L1026.05 103.19L1029.40 116.89M1026.05 103.19A3.35 3.35 0 0 1 1032.75 103.19M1029.40 116.89A3.35 3.35 0 0 0 1036.10 116.89M1029.40 116.89L1032.75 103.19L1036.10 116.89M1032.75 103.19A3.35 3.35 0 0 1 1039.45 103.19M1036.10 116.89A3.35 3.35 0 0 0 1042.80 116.89M1036.10 116.89L1039.45 103.19L1042.80 116.89M1039.45 103.19A3.35 3.35 0 0 1 1046.15 103.19M1042.80 116.89A3.35 3.35 0 0 0 1049.50 116.89M1042.80 116.89L1046.15 103.19L1049.50 116.89M1046.15 103.19A3.35 3.35 0 0 1 1052.85 103.19M1049.50 116.89A3.35 3.35 0 0 0 1056.20 116.89M1049.50 116.89L1052.85 103.19L1056.20 116.89M1052.85 103.19A3.35 3.35 0 0 1 1059.55 103.19M1056.20 116.89A3.35 3.35 0 0 0 1062.90 116.89M1056.20 116.89L1059.55 103.19L1062.90 116.89M1059.55 103.19A3.35 3.35 0 0 1 1066.25 103.19M1062.90 116.89A3.35 3.35 0 0 0 1069.60 116.89M1062.90 116.89L1066.25 103.19L1069.60 116.89M1066.25 103.19A3.35 3.35 0 0 1 1072.95 103.19M1069.60 116.89A3.35 3.35 0 0 0 1076.30 116.89M1069.60 116.89L1072.95 103.19L1076.30 116.89M1072.95 103.19A3.35 3.35 0 0 1 1079.65 103.19M1076.30 116.89A3.35 3.35 0 0 0 1083.00 116.89M1076.30 116.89L1079.65 103.19L1083.00 116.89M1079.65 103.19A3.35 3.35 0 0 1 1086.35 103.19M1083.00 116.89A3.35 3.35 0 0 0 1089.70 116.89M1083.00 116.89L1086.35 103.19L1089.70 116.89" fill="none" stroke="#aeac76" stroke-width="0.7"/><path clip-path="url(#cl160)" d="M725.00 129.74A9.50 9.50 0 0 1 744.00 129.74M734.50 165.14A9.50 9.50 0 0 0 753.50 165.14M734.50 165.14L744.00 129.74L753.50 165.14M744.00 129.74A9.50 9.50 0 0 1 763.00 129.74M753.50 165.14A9.50 9.50 0 0 0 772.50 165.14M753.50 165.14L763.00 129.74L772.50 165.14M763.00 129.74A9.50 9.50 0 0 1 782.00 129.74M772.50 165.14A9.50 9.50 0 0 0 791.50 165.14M772.50 165.14L782.00 129.74L791.50 165.14M782.00 129.74A9.50 9.50 0 0 1 801.00 129.74M791.50 165.14A9.50 9.50 0 0 0 810.50 165.14M791.50 165.14L801.00 129.74L810.50 165.14M801.00 129.74A9.50 9.50 0 0 1 820.00 129.74M810.50 165.14A9.50 9.50 0 0 0 829.50 165.14M810.50 165.14L820.00 129.74L829.50 165.14M820.00 129.74A9.50 9.50 0 0 1 839.00 129.74M829.50 165.14A9.50 9.50 0 0 0 848.50 165.14M829.50 165.14L839.00 129.74L848.50 165.14M839.00 129.74A9.50 9.50 0 0 1 858.00 129.74M848.50 165.14A9.50 9.50 0 0 0 867.50 165.14M848.50 165.14L858.00 129.74L867.50 165.14M858.00 129.74A9.50 9.50 0 0 1 877.00 129.74M867.50 165.14A9.50 9.50 0 0 0 886.50 165.14M867.50 165.14L877.00 129.74L886.50 165.14M877.00 129.74A9.50 9.50 0 0 1 896.00 129.74M886.50 165.14A9.50 9.50 0 0 0 905.50 165.14M886.50 165.14L896.00 129.74L905.50 165.14M896.00 129.74A9.50 9.50 0 0 1 915.00 129.74M905.50 165.14A9.50 9.50 0 0 0 924.50 165.14M905.50 165.14L915.00 129.74L924.50 165.14M915.00 129.74A9.50 9.50 0 0 1 934.00 129.74M924.50 165.14A9.50 9.50 0 0 0 943.50 165.14M924.50 165.14L934.00 129.74L943.50 165.14M934.00 129.74A9.50 9.50 0 0 1 953.00 129.74M943.50 165.14A9.50 9.50 0 0 0 962.50 165.14M943.50 165.14L953.00 129.74L962.50 165.14M953.00 129.74A9.50 9.50 0 0 1 972.00 129.74M962.50 165.14A9.50 9.50 0 0 0 981.50 165.14M962.50 165.14L972.00 129.74L981.50 165.14M972.00 129.74A9.50 9.50 0 0 1 991.00 129.74M981.50 165.14A9.50 9.50 0 0 0 1000.50 165.14M981.50 165.14L991.00 129.74L1000.50 165.14M991.00 129.74A9.50 9.50 0 0 1 1010.00 129.74M1000.50 165.14A9.50 9.50 0 0 0 1019.50 165.14M1000.50 165.14L1010.00 129.74L1019.50 165.14M1010.00 129.74A9.50 9.50 0 0 1 1029.00 129.74M1019.50 165.14A9.50 9.50 0 0 0 1038.50 165.14M1019.50 165.14L1029.00 129.74L1038.50 165.14M1029.00 129.74A9.50 9.50 0 0 1 1048.00 129.74M1038.50 165.14A9.50 9.50 0 0 0 1057.50 165.14M1038.50 165.14L1048.00 129.74L1057.50 165.14M1048.00 129.74A9.50 9.50 0 0 1 1067.00 129.74M1057.50 165.14A9.50 9.50 0 0 0 1076.50 165.14M1057.50 165.14L1067.00 129.74L1076.50 165.14M1067.00 129.74A9.50 9.50 0 0 1 1086.00 129.74M1076.50 165.14A9.50 9.50 0 0 0 1095.50 165.14M1076.50 165.14L1086.00 129.74L1095.50 165.14M1086.00 129.74A9.50 9.50 0 0 1 1105.00 129.74M1095.50 165.14A9.50 9.50 0 0 0 1114.50 165.14M1095.50 165.14L1105.00 129.74L1114.50 165.14" fill="none" stroke="#aeac76" stroke-width="0.7"/><path clip-path="url(#cl40)" d="M747.40 176.74A2.10 2.10 0 0 1 751.60 176.74M749.50 186.14A2.10 2.10 0 0 0 753.70 186.14M749.50 186.14L751.60 176.74L753.70 186.14M751.60 176.74A2.10 2.10 0 0 1 755.80 176.74M753.70 186.14A2.10 2.10 0 0 0 757.90 186.14M753.70 186.14L755.80 176.74L757.90 186.14M755.80 176.74A2.10 2.10 0 0 1 760.00 176.74M757.90 186.14A2.10 2.10 0 0 0 762.10 186.14M757.90 186.14L760.00 176.74L762.10 186.14M760.00 176.74A2.10 2.10 0 0 1 764.20 176.74M762.10 186.14A2.10 2.10 0 0 0 766.30 186.14M762.10 186.14L764.20 176.74L766.30 186.14M764.20 176.74A2.10 2.10 0 0 1 768.40 176.74M766.30 186.14A2.10 2.10 0 0 0 770.50 186.14M766.30 186.14L768.40 176.74L770.50 186.14M768.40 176.74A2.10 2.10 0 0 1 772.60 176.74M770.50 186.14A2.10 2.10 0 0 0 774.70 186.14M770.50 186.14L772.60 176.74L774.70 186.14M772.60 176.74A2.10 2.10 0 0 1 776.80 176.74M774.70 186.14A2.10 2.10 0 0 0 778.90 186.14M774.70 186.14L776.80 176.74L778.90 186.14M776.80 176.74A2.10 2.10 0 0 1 781.00 176.74M778.90 186.14A2.10 2.10 0 0 0 783.10 186.14M778.90 186.14L781.00 176.74L783.10 186.14M781.00 176.74A2.10 2.10 0 0 1 785.20 176.74M783.10 186.14A2.10 2.10 0 0 0 787.30 186.14M783.10 186.14L785.20 176.74L787.30 186.14M785.20 176.74A2.10 2.10 0 0 1 789.40 176.74M787.30 186.14A2.10 2.10 0 0 0 791.50 186.14M787.30 186.14L789.40 176.74L791.50 186.14M789.40 176.74A2.10 2.10 0 0 1 793.60 176.74M791.50 186.14A2.10 2.10 0 0 0 795.70 186.14M791.50 186.14L793.60 176.74L795.70 186.14M793.60 176.74A2.10 2.10 0 0 1 797.80 176.74M795.70 186.14A2.10 2.10 0 0 0 799.90 186.14M795.70 186.14L797.80 176.74L799.90 186.14M797.80 176.74A2.10 2.10 0 0 1 802.00 176.74M799.90 186.14A2.10 2.10 0 0 0 804.10 186.14M799.90 186.14L802.00 176.74L804.10 186.14M802.00 176.74A2.10 2.10 0 0 1 806.20 176.74M804.10 186.14A2.10 2.10 0 0 0 808.30 186.14M804.10 186.14L806.20 176.74L808.30 186.14M806.20 176.74A2.10 2.10 0 0 1 810.40 176.74M808.30 186.14A2.10 2.10 0 0 0 812.50 186.14M808.30 186.14L810.40 176.74L812.50 186.14M810.40 176.74A2.10 2.10 0 0 1 814.60 176.74M812.50 186.14A2.10 2.10 0 0 0 816.70 186.14M812.50 186.14L814.60 176.74L816.70 186.14M814.60 176.74A2.10 2.10 0 0 1 818.80 176.74M816.70 186.14A2.10 2.10 0 0 0 820.90 186.14M816.70 186.14L818.80 176.74L820.90 186.14M818.80 176.74A2.10 2.10 0 0 1 823.00 176.74M820.90 186.14A2.10 2.10 0 0 0 825.10 186.14M820.90 186.14L823.00 176.74L825.10 186.14M823.00 176.74A2.10 2.10 0 0 1 827.20 176.74M825.10 186.14A2.10 2.10 0 0 0 829.30 186.14M825.10 186.14L827.20 176.74L829.30 186.14M827.20 176.74A2.10 2.10 0 0 1 831.40 176.74M829.30 186.14A2.10 2.10 0 0 0 833.50 186.14M829.30 186.14L831.40 176.74L833.50 186.14M831.40 176.74A2.10 2.10 0 0 1 835.60 176.74M833.50 186.14A2.10 2.10 0 0 0 837.70 186.14M833.50 186.14L835.60 176.74L837.70 186.14M835.60 176.74A2.10 2.10 0 0 1 839.80 176.74M837.70 186.14A2.10 2.10 0 0 0 841.90 186.14M837.70 186.14L839.80 176.74L841.90 186.14M839.80 176.74A2.10 2.10 0 0 1 844.00 176.74M841.90 186.14A2.10 2.10 0 0 0 846.10 186.14M841.90 186.14L844.00 176.74L846.10 186.14M844.00 176.74A2.10 2.10 0 0 1 848.20 176.74M846.10 186.14A2.10 2.10 0 0 0 850.30 186.14M846.10 186.14L848.20 176.74L850.30 186.14M848.20 176.74A2.10 2.10 0 0 1 852.40 176.74M850.30 186.14A2.10 2.10 0 0 0 854.50 186.14M850.30 186.14L852.40 176.74L854.50 186.14M852.40 176.74A2.10 2.10 0 0 1 856.60 176.74M854.50 186.14A2.10 2.10 0 0 0 858.70 186.14M854.50 186.14L856.60 176.74L858.70 186.14M856.60 176.74A2.10 2.10 0 0 1 860.80 176.74M858.70 186.14A2.10 2.10 0 0 0 862.90 186.14M858.70 186.14L860.80 176.74L862.90 186.14M860.80 176.74A2.10 2.10 0 0 1 865.00 176.74M862.90 186.14A2.10 2.10 0 0 0 867.10 186.14M862.90 186.14L865.00 176.74L867.10 186.14M865.00 176.74A2.10 2.10 0 0 1 869.20 176.74M867.10 186.14A2.10 2.10 0 0 0 871.30 186.14M867.10 186.14L869.20 176.74L871.30 186.14M869.20 176.74A2.10 2.10 0 0 1 873.40 176.74M871.30 186.14A2.10 2.10 0 0 0 875.50 186.14M871.30 186.14L873.40 176.74L875.50 186.14M873.40 176.74A2.10 2.10 0 0 1 877.60 176.74M875.50 186.14A2.10 2.10 0 0 0 879.70 186.14M875.50 186.14L877.60 176.74L879.70 186.14M877.60 176.74A2.10 2.10 0 0 1 881.80 176.74M879.70 186.14A2.10 2.10 0 0 0 883.90 186.14M879.70 186.14L881.80 176.74L883.90 186.14M881.80 176.74A2.10 2.10 0 0 1 886.00 176.74M883.90 186.14A2.10 2.10 0 0 0 888.10 186.14M883.90 186.14L886.00 176.74L888.10 186.14M886.00 176.74A2.10 2.10 0 0 1 890.20 176.74M888.10 186.14A2.10 2.10 0 0 0 892.30 186.14M888.10 186.14L890.20 176.74L892.30 186.14M890.20 176.74A2.10 2.10 0 0 1 894.40 176.74M892.30 186.14A2.10 2.10 0 0 0 896.50 186.14M892.30 186.14L894.40 176.74L896.50 186.14M894.40 176.74A2.10 2.10 0 0 1 898.60 176.74M896.50 186.14A2.10 2.10 0 0 0 900.70 186.14M896.50 186.14L898.60 176.74L900.70 186.14M898.60 176.74A2.10 2.10 0 0 1 902.80 176.74M900.70 186.14A2.10 2.10 0 0 0 904.90 186.14M900.70 186.14L902.80 176.74L904.90 186.14M902.80 176.74A2.10 2.10 0 0 1 907.00 176.74M904.90 186.14A2.10 2.10 0 0 0 909.10 186.14M904.90 186.14L907.00 176.74L909.10 186.14M907.00 176.74A2.10 2.10 0 0 1 911.20 176.74M909.10 186.14A2.10 2.10 0 0 0 913.30 186.14M909.10 186.14L911.20 176.74L913.30 186.14M911.20 176.74A2.10 2.10 0 0 1 915.40 176.74M913.30 186.14A2.10 2.10 0 0 0 917.50 186.14M913.30 186.14L915.40 176.74L917.50 186.14M915.40 176.74A2.10 2.10 0 0 1 919.60 176.74M917.50 186.14A2.10 2.10 0 0 0 921.70 186.14M917.50 186.14L919.60 176.74L921.70 186.14M919.60 176.74A2.10 2.10 0 0 1 923.80 176.74M921.70 186.14A2.10 2.10 0 0 0 925.90 186.14M921.70 186.14L923.80 176.74L925.90 186.14M923.80 176.74A2.10 2.10 0 0 1 928.00 176.74M925.90 186.14A2.10 2.10 0 0 0 930.10 186.14M925.90 186.14L928.00 176.74L930.10 186.14M928.00 176.74A2.10 2.10 0 0 1 932.20 176.74M930.10 186.14A2.10 2.10 0 0 0 934.30 186.14M930.10 186.14L932.20 176.74L934.30 186.14M932.20 176.74A2.10 2.10 0 0 1 936.40 176.74M934.30 186.14A2.10 2.10 0 0 0 938.50 186.14M934.30 186.14L936.40 176.74L938.50 186.14M936.40 176.74A2.10 2.10 0 0 1 940.60 176.74M938.50 186.14A2.10 2.10 0 0 0 942.70 186.14M938.50 186.14L940.60 176.74L942.70 186.14M940.60 176.74A2.10 2.10 0 0 1 944.80 176.74M942.70 186.14A2.10 2.10 0 0 0 946.90 186.14M942.70 186.14L944.80 176.74L946.90 186.14M944.80 176.74A2.10 2.10 0 0 1 949.00 176.74M946.90 186.14A2.10 2.10 0 0 0 951.10 186.14M946.90 186.14L949.00 176.74L951.10 186.14M949.00 176.74A2.10 2.10 0 0 1 953.20 176.74M951.10 186.14A2.10 2.10 0 0 0 955.30 186.14M951.10 186.14L953.20 176.74L955.30 186.14M953.20 176.74A2.10 2.10 0 0 1 957.40 176.74M955.30 186.14A2.10 2.10 0 0 0 959.50 186.14M955.30 186.14L957.40 176.74L959.50 186.14M957.40 176.74A2.10 2.10 0 0 1 961.60 176.74M959.50 186.14A2.10 2.10 0 0 0 963.70 186.14M959.50 186.14L961.60 176.74L963.70 186.14M961.60 176.74A2.10 2.10 0 0 1 965.80 176.74M963.70 186.14A2.10 2.10 0 0 0 967.90 186.14M963.70 186.14L965.80 176.74L967.90 186.14M965.80 176.74A2.10 2.10 0 0 1 970.00 176.74M967.90 186.14A2.10 2.10 0 0 0 972.10 186.14M967.90 186.14L970.00 176.74L972.10 186.14M970.00 176.74A2.10 2.10 0 0 1 974.20 176.74M972.10 186.14A2.10 2.10 0 0 0 976.30 186.14M972.10 186.14L974.20 176.74L976.30 186.14M974.20 176.74A2.10 2.10 0 0 1 978.40 176.74M976.30 186.14A2.10 2.10 0 0 0 980.50 186.14M976.30 186.14L978.40 176.74L980.50 186.14M978.40 176.74A2.10 2.10 0 0 1 982.60 176.74M980.50 186.14A2.10 2.10 0 0 0 984.70 186.14M980.50 186.14L982.60 176.74L984.70 186.14M982.60 176.74A2.10 2.10 0 0 1 986.80 176.74M984.70 186.14A2.10 2.10 0 0 0 988.90 186.14M984.70 186.14L986.80 176.74L988.90 186.14M986.80 176.74A2.10 2.10 0 0 1 991.00 176.74M988.90 186.14A2.10 2.10 0 0 0 993.10 186.14M988.90 186.14L991.00 176.74L993.10 186.14M991.00 176.74A2.10 2.10 0 0 1 995.20 176.74M993.10 186.14A2.10 2.10 0 0 0 997.30 186.14M993.10 186.14L995.20 176.74L997.30 186.14M995.20 176.74A2.10 2.10 0 0 1 999.40 176.74M997.30 186.14A2.10 2.10 0 0 0 1001.50 186.14M997.30 186.14L999.40 176.74L1001.50 186.14M999.40 176.74A2.10 2.10 0 0 1 1003.60 176.74M1001.50 186.14A2.10 2.10 0 0 0 1005.70 186.14M1001.50 186.14L1003.60 176.74L1005.70 186.14M1003.60 176.74A2.10 2.10 0 0 1 1007.80 176.74M1005.70 186.14A2.10 2.10 0 0 0 1009.90 186.14M1005.70 186.14L1007.80 176.74L1009.90 186.14M1007.80 176.74A2.10 2.10 0 0 1 1012.00 176.74M1009.90 186.14A2.10 2.10 0 0 0 1014.10 186.14M1009.90 186.14L1012.00 176.74L1014.10 186.14M1012.00 176.74A2.10 2.10 0 0 1 1016.20 176.74M1014.10 186.14A2.10 2.10 0 0 0 1018.30 186.14M1014.10 186.14L1016.20 176.74L1018.30 186.14M1016.20 176.74A2.10 2.10 0 0 1 1020.40 176.74M1018.30 186.14A2.10 2.10 0 0 0 1022.50 186.14M1018.30 186.14L1020.40 176.74L1022.50 186.14M1020.40 176.74A2.10 2.10 0 0 1 1024.60 176.74M1022.50 186.14A2.10 2.10 0 0 0 1026.70 186.14M1022.50 186.14L1024.60 176.74L1026.70 186.14M1024.60 176.74A2.10 2.10 0 0 1 1028.80 176.74M1026.70 186.14A2.10 2.10 0 0 0 1030.90 186.14M1026.70 186.14L1028.80 176.74L1030.90 186.14M1028.80 176.74A2.10 2.10 0 0 1 1033.00 176.74M1030.90 186.14A2.10 2.10 0 0 0 1035.10 186.14M1030.90 186.14L1033.00 176.74L1035.10 186.14M1033.00 176.74A2.10 2.10 0 0 1 1037.20 176.74M1035.10 186.14A2.10 2.10 0 0 0 1039.30 186.14M1035.10 186.14L1037.20 176.74L1039.30 186.14M1037.20 176.74A2.10 2.10 0 0 1 1041.40 176.74M1039.30 186.14A2.10 2.10 0 0 0 1043.50 186.14M1039.30 186.14L1041.40 176.74L1043.50 186.14M1041.40 176.74A2.10 2.10 0 0 1 1045.60 176.74M1043.50 186.14A2.10 2.10 0 0 0 1047.70 186.14M1043.50 186.14L1045.60 176.74L1047.70 186.14M1045.60 176.74A2.10 2.10 0 0 1 1049.80 176.74M1047.70 186.14A2.10 2.10 0 0 0 1051.90 186.14M1047.70 186.14L1049.80 176.74L1051.90 186.14M1049.80 176.74A2.10 2.10 0 0 1 1054.00 176.74M1051.90 186.14A2.10 2.10 0 0 0 1056.10 186.14M1051.90 186.14L1054.00 176.74L1056.10 186.14M1054.00 176.74A2.10 2.10 0 0 1 1058.20 176.74M1056.10 186.14A2.10 2.10 0 0 0 1060.30 186.14M1056.10 186.14L1058.20 176.74L1060.30 186.14M1058.20 176.74A2.10 2.10 0 0 1 1062.40 176.74M1060.30 186.14A2.10 2.10 0 0 0 1064.50 186.14M1060.30 186.14L1062.40 176.74L1064.50 186.14M1062.40 176.74A2.10 2.10 0 0 1 1066.60 176.74M1064.50 186.14A2.10 2.10 0 0 0 1068.70 186.14M1064.50 186.14L1066.60 176.74L1068.70 186.14M1066.60 176.74A2.10 2.10 0 0 1 1070.80 176.74M1068.70 186.14A2.10 2.10 0 0 0 1072.90 186.14M1068.70 186.14L1070.80 176.74L1072.90 186.14M1070.80 176.74A2.10 2.10 0 0 1 1075.00 176.74M1072.90 186.14A2.10 2.10 0 0 0 1077.10 186.14M1072.90 186.14L1075.00 176.74L1077.10 186.14M1075.00 176.74A2.10 2.10 0 0 1 1079.20 176.74M1077.10 186.14A2.10 2.10 0 0 0 1081.30 186.14M1077.10 186.14L1079.20 176.74L1081.30 186.14M1079.20 176.74A2.10 2.10 0 0 1 1083.40 176.74M1081.30 186.14A2.10 2.10 0 0 0 1085.50 186.14M1081.30 186.14L1083.40 176.74L1085.50 186.14" fill="none" stroke="#aeac76" stroke-width="0.7"/><rect x="752.7" y="91.38" width="323.5" height="8.459999999999997" fill="#c9a27f"/><path d="M752.7 97.5 Q800 93 850 96 T960 95 T1076 96 M760 99.5 Q820 95.5 900 98 T1076 97.5" fill="none" stroke="#a98562" stroke-width="0.6"/><rect x="752.70" y="90.36" width="14.50" height="1.7" fill="#262626"/><rect x="782.12" y="90.36" width="14.50" height="1.7" fill="#262626"/><rect x="811.54" y="90.36" width="14.50" height="1.7" fill="#262626"/><rect x="840.96" y="90.36" width="14.50" height="1.7" fill="#262626"/><rect x="870.38" y="90.36" width="14.50" height="1.7" fill="#262626"/><rect x="899.80" y="90.36" width="14.50" height="1.7" fill="#262626"/><rect x="929.22" y="90.36" width="14.50" height="1.7" fill="#262626"/><rect x="958.64" y="90.36" width="14.50" height="1.7" fill="#262626"/><rect x="988.06" y="90.36" width="14.50" height="1.7" fill="#262626"/><rect x="1017.48" y="90.36" width="14.50" height="1.7" fill="#262626"/><rect x="1046.90" y="90.36" width="14.50" height="1.7" fill="#262626"/><rect x="752.70" y="187.64" width="14.50" height="1.4" fill="#3a3a3a"/><rect x="782.12" y="187.64" width="14.50" height="1.4" fill="#3a3a3a"/><rect x="811.54" y="187.64" width="14.50" height="1.4" fill="#3a3a3a"/><rect x="840.96" y="187.64" width="14.50" height="1.4" fill="#3a3a3a"/><rect x="870.38" y="187.64" width="14.50" height="1.4" fill="#3a3a3a"/><rect x="899.80" y="187.64" width="14.50" height="1.4" fill="#3a3a3a"/><rect x="929.22" y="187.64" width="14.50" height="1.4" fill="#3a3a3a"/><rect x="958.64" y="187.64" width="14.50" height="1.4" fill="#3a3a3a"/><rect x="988.06" y="187.64" width="14.50" height="1.4" fill="#3a3a3a"/><rect x="1017.48" y="187.64" width="14.50" height="1.4" fill="#3a3a3a"/><rect x="1046.90" y="187.64" width="14.50" height="1.4" fill="#3a3a3a"/><clipPath id="b1"><rect x="792.00" y="99.84" width="20.40" height="20.40"/></clipPath><rect x="792.00" y="99.84" width="20.40" height="20.40" fill="#c9a27f"/><g clip-path="url(#b1)" fill="none" stroke="#ad8864" stroke-width="0.65"><circle cx="792.40" cy="110.00" r="1.50"/><circle cx="792.40" cy="110.00" r="4.50"/><circle cx="792.40" cy="110.00" r="7.50"/><circle cx="792.40" cy="110.00" r="10.50"/><circle cx="792.40" cy="110.00" r="13.50"/><circle cx="792.40" cy="110.00" r="16.50"/><circle cx="792.40" cy="110.00" r="19.50"/><circle cx="792.40" cy="110.00" r="22.50"/><circle cx="792.40" cy="110.00" r="25.50"/><circle cx="792.40" cy="110.00" r="28.50"/><circle cx="792.40" cy="110.00" r="31.50"/><circle cx="792.40" cy="110.00" r="34.50"/><circle cx="792.40" cy="110.00" r="37.50"/><circle cx="792.40" cy="110.00" r="40.50"/><circle cx="792.40" cy="110.00" r="43.50"/><circle cx="792.40" cy="110.00" r="46.50"/><circle cx="792.40" cy="110.00" r="49.50"/><circle cx="792.40" cy="110.00" r="52.50"/><circle cx="792.40" cy="110.00" r="55.50"/><circle cx="792.40" cy="110.00" r="58.50"/></g><clipPath id="b2"><rect x="786.90" y="120.24" width="25.50" height="54.40"/></clipPath><rect x="786.90" y="120.24" width="25.50" height="54.40" fill="#c9a27f"/><g clip-path="url(#b2)" fill="none" stroke="#ad8864" stroke-width="0.65"><circle cx="787.40" cy="147.50" r="1.50"/><circle cx="787.40" cy="147.50" r="4.50"/><circle cx="787.40" cy="147.50" r="7.50"/><circle cx="787.40" cy="147.50" r="10.50"/><circle cx="787.40" cy="147.50" r="13.50"/><circle cx="787.40" cy="147.50" r="16.50"/><circle cx="787.40" cy="147.50" r="19.50"/><circle cx="787.40" cy="147.50" r="22.50"/><circle cx="787.40" cy="147.50" r="25.50"/><circle cx="787.40" cy="147.50" r="28.50"/><circle cx="787.40" cy="147.50" r="31.50"/><circle cx="787.40" cy="147.50" r="34.50"/><circle cx="787.40" cy="147.50" r="37.50"/><circle cx="787.40" cy="147.50" r="40.50"/><circle cx="787.40" cy="147.50" r="43.50"/><circle cx="787.40" cy="147.50" r="46.50"/><circle cx="787.40" cy="147.50" r="49.50"/><circle cx="787.40" cy="147.50" r="52.50"/><circle cx="787.40" cy="147.50" r="55.50"/><circle cx="787.40" cy="147.50" r="58.50"/></g><clipPath id="b3"><rect x="786.90" y="174.64" width="25.50" height="13.60"/></clipPath><rect x="786.90" y="174.64" width="25.50" height="13.60" fill="#c9a27f"/><g clip-path="url(#b3)" fill="none" stroke="#ad8864" stroke-width="0.65"><circle cx="799.70" cy="188.24" r="1.50"/><circle cx="799.70" cy="188.24" r="4.50"/><circle cx="799.70" cy="188.24" r="7.50"/><circle cx="799.70" cy="188.24" r="10.50"/><circle cx="799.70" cy="188.24" r="13.50"/><circle cx="799.70" cy="188.24" r="16.50"/><circle cx="799.70" cy="188.24" r="19.50"/><circle cx="799.70" cy="188.24" r="22.50"/><circle cx="799.70" cy="188.24" r="25.50"/><circle cx="799.70" cy="188.24" r="28.50"/><circle cx="799.70" cy="188.24" r="31.50"/><circle cx="799.70" cy="188.24" r="34.50"/><circle cx="799.70" cy="188.24" r="37.50"/><circle cx="799.70" cy="188.24" r="40.50"/><circle cx="799.70" cy="188.24" r="43.50"/><circle cx="799.70" cy="188.24" r="46.50"/><circle cx="799.70" cy="188.24" r="49.50"/><circle cx="799.70" cy="188.24" r="52.50"/><circle cx="799.70" cy="188.24" r="55.50"/><circle cx="799.70" cy="188.24" r="58.50"/></g><clipPath id="b4"><rect x="785.20" y="188.24" width="27.20" height="20.47"/></clipPath><rect x="785.20" y="188.24" width="27.20" height="20.47" fill="#c9a27f"/><g clip-path="url(#b4)" fill="none" stroke="#ad8864" stroke-width="0.65"><circle cx="798.80" cy="208.71" r="1.50"/><circle cx="798.80" cy="208.71" r="4.50"/><circle cx="798.80" cy="208.71" r="7.50"/><circle cx="798.80" cy="208.71" r="10.50"/><circle cx="798.80" cy="208.71" r="13.50"/><circle cx="798.80" cy="208.71" r="16.50"/><circle cx="798.80" cy="208.71" r="19.50"/><circle cx="798.80" cy="208.71" r="22.50"/><circle cx="798.80" cy="208.71" r="25.50"/><circle cx="798.80" cy="208.71" r="28.50"/><circle cx="798.80" cy="208.71" r="31.50"/><circle cx="798.80" cy="208.71" r="34.50"/><circle cx="798.80" cy="208.71" r="37.50"/><circle cx="798.80" cy="208.71" r="40.50"/><circle cx="798.80" cy="208.71" r="43.50"/><circle cx="798.80" cy="208.71" r="46.50"/><circle cx="798.80" cy="208.71" r="49.50"/><circle cx="798.80" cy="208.71" r="52.50"/><circle cx="798.80" cy="208.71" r="55.50"/><circle cx="798.80" cy="208.71" r="58.50"/></g><clipPath id="b5"><rect x="1016.80" y="99.84" width="20.40" height="20.40"/></clipPath><rect x="1016.80" y="99.84" width="20.40" height="20.40" fill="#c9a27f"/><g clip-path="url(#b5)" fill="none" stroke="#ad8864" stroke-width="0.65"><circle cx="1017.30" cy="110.00" r="1.50"/><circle cx="1017.30" cy="110.00" r="4.50"/><circle cx="1017.30" cy="110.00" r="7.50"/><circle cx="1017.30" cy="110.00" r="10.50"/><circle cx="1017.30" cy="110.00" r="13.50"/><circle cx="1017.30" cy="110.00" r="16.50"/><circle cx="1017.30" cy="110.00" r="19.50"/><circle cx="1017.30" cy="110.00" r="22.50"/><circle cx="1017.30" cy="110.00" r="25.50"/><circle cx="1017.30" cy="110.00" r="28.50"/><circle cx="1017.30" cy="110.00" r="31.50"/><circle cx="1017.30" cy="110.00" r="34.50"/><circle cx="1017.30" cy="110.00" r="37.50"/><circle cx="1017.30" cy="110.00" r="40.50"/><circle cx="1017.30" cy="110.00" r="43.50"/><circle cx="1017.30" cy="110.00" r="46.50"/><circle cx="1017.30" cy="110.00" r="49.50"/><circle cx="1017.30" cy="110.00" r="52.50"/><circle cx="1017.30" cy="110.00" r="55.50"/><circle cx="1017.30" cy="110.00" r="58.50"/></g><clipPath id="b6"><rect x="1016.80" y="120.24" width="25.50" height="54.40"/></clipPath><rect x="1016.80" y="120.24" width="25.50" height="54.40" fill="#c9a27f"/><g clip-path="url(#b6)" fill="none" stroke="#ad8864" stroke-width="0.65"><circle cx="1017.30" cy="147.50" r="1.50"/><circle cx="1017.30" cy="147.50" r="4.50"/><circle cx="1017.30" cy="147.50" r="7.50"/><circle cx="1017.30" cy="147.50" r="10.50"/><circle cx="1017.30" cy="147.50" r="13.50"/><circle cx="1017.30" cy="147.50" r="16.50"/><circle cx="1017.30" cy="147.50" r="19.50"/><circle cx="1017.30" cy="147.50" r="22.50"/><circle cx="1017.30" cy="147.50" r="25.50"/><circle cx="1017.30" cy="147.50" r="28.50"/><circle cx="1017.30" cy="147.50" r="31.50"/><circle cx="1017.30" cy="147.50" r="34.50"/><circle cx="1017.30" cy="147.50" r="37.50"/><circle cx="1017.30" cy="147.50" r="40.50"/><circle cx="1017.30" cy="147.50" r="43.50"/><circle cx="1017.30" cy="147.50" r="46.50"/><circle cx="1017.30" cy="147.50" r="49.50"/><circle cx="1017.30" cy="147.50" r="52.50"/><circle cx="1017.30" cy="147.50" r="55.50"/><circle cx="1017.30" cy="147.50" r="58.50"/></g><clipPath id="b7"><rect x="1016.80" y="174.64" width="25.50" height="13.60"/></clipPath><rect x="1016.80" y="174.64" width="25.50" height="13.60" fill="#c9a27f"/><g clip-path="url(#b7)" fill="none" stroke="#ad8864" stroke-width="0.65"><circle cx="1029.50" cy="188.24" r="1.50"/><circle cx="1029.50" cy="188.24" r="4.50"/><circle cx="1029.50" cy="188.24" r="7.50"/><circle cx="1029.50" cy="188.24" r="10.50"/><circle cx="1029.50" cy="188.24" r="13.50"/><circle cx="1029.50" cy="188.24" r="16.50"/><circle cx="1029.50" cy="188.24" r="19.50"/><circle cx="1029.50" cy="188.24" r="22.50"/><circle cx="1029.50" cy="188.24" r="25.50"/><circle cx="1029.50" cy="188.24" r="28.50"/><circle cx="1029.50" cy="188.24" r="31.50"/><circle cx="1029.50" cy="188.24" r="34.50"/><circle cx="1029.50" cy="188.24" r="37.50"/><circle cx="1029.50" cy="188.24" r="40.50"/><circle cx="1029.50" cy="188.24" r="43.50"/><circle cx="1029.50" cy="188.24" r="46.50"/><circle cx="1029.50" cy="188.24" r="49.50"/><circle cx="1029.50" cy="188.24" r="52.50"/><circle cx="1029.50" cy="188.24" r="55.50"/><circle cx="1029.50" cy="188.24" r="58.50"/></g><clipPath id="b8"><rect x="1016.80" y="188.24" width="27.20" height="20.47"/></clipPath><rect x="1016.80" y="188.24" width="27.20" height="20.47" fill="#c9a27f"/><g clip-path="url(#b8)" fill="none" stroke="#ad8864" stroke-width="0.65"><circle cx="1030.40" cy="208.71" r="1.50"/><circle cx="1030.40" cy="208.71" r="4.50"/><circle cx="1030.40" cy="208.71" r="7.50"/><circle cx="1030.40" cy="208.71" r="10.50"/><circle cx="1030.40" cy="208.71" r="13.50"/><circle cx="1030.40" cy="208.71" r="16.50"/><circle cx="1030.40" cy="208.71" r="19.50"/><circle cx="1030.40" cy="208.71" r="22.50"/><circle cx="1030.40" cy="208.71" r="25.50"/><circle cx="1030.40" cy="208.71" r="28.50"/><circle cx="1030.40" cy="208.71" r="31.50"/><circle cx="1030.40" cy="208.71" r="34.50"/><circle cx="1030.40" cy="208.71" r="37.50"/><circle cx="1030.40" cy="208.71" r="40.50"/><circle cx="1030.40" cy="208.71" r="43.50"/><circle cx="1030.40" cy="208.71" r="46.50"/><circle cx="1030.40" cy="208.71" r="49.50"/><circle cx="1030.40" cy="208.71" r="52.50"/><circle cx="1030.40" cy="208.71" r="55.50"/><circle cx="1030.40" cy="208.71" r="58.50"/></g><rect x="752.7" y="209.208" width="323.5" height="4.25" fill="#d8d8d8"/><rect x="752.7" y="209.208" width="323.5" height="0.8" fill="#bdbdbd"/><rect x="752.7" y="212.658" width="323.5" height="0.8" fill="#c4c4c4"/><g stroke="#8a8a8a" stroke-width="1"><line x1="717" y1="82.5" x2="717" y2="212.958"/><line x1="713" y1="82.50" x2="721" y2="82.50"/><line x1="713" y1="91.16" x2="721" y2="91.16"/><line x1="713" y1="99.84" x2="721" y2="99.84"/><line x1="713" y1="120.24" x2="721" y2="120.24"/><line x1="713" y1="174.64" x2="721" y2="174.64"/><line x1="713" y1="188.24" x2="721" y2="188.24"/><line x1="713" y1="208.71" x2="721" y2="208.71"/><line x1="713" y1="212.96" x2="721" y2="212.96"/></g><g fill="#8f8f8f" font-size="12.5"><text x="721" y="115.2">60</text><text x="721" y="153">160</text><text x="721" y="186.3">40</text><text x="721" y="203.8">60</text><text transform="translate(711 148.7) rotate(-90)" text-anchor="middle" font-size="12.2">383,7</text></g><text x="914.5" y="76.5" text-anchor="middle" fill="#8a8a8a" font-size="12.5">Außen</text><text x="914.5" y="228.5" text-anchor="middle" fill="#8a8a8a" font-size="12.5">Innen</text><text x="1076" y="228.5" text-anchor="end" fill="#c2c2c2" font-size="12.6">ubakus.de</text><g stroke="#8a8a8a" stroke-width="1"><line x1="785.2" y1="240.5" x2="1016.8" y2="240.5"/><line x1="785.2" y1="236.5" x2="785.2" y2="244.5"/><line x1="812.4" y1="236.5" x2="812.4" y2="244.5"/><line x1="1016.8" y1="236.5" x2="1016.8" y2="244.5"/><line x1="786.9" y1="258.3" x2="1016.8" y2="258.3"/><line x1="786.9" y1="254.3" x2="786.9" y2="262.3"/><line x1="812.4" y1="254.3" x2="812.4" y2="262.3"/><line x1="1016.8" y1="254.3" x2="1016.8" y2="262.3"/><line x1="791.9" y1="275.9" x2="1016.8" y2="275.9"/><line x1="791.9" y1="271.9" x2="791.9" y2="279.9"/><line x1="812.4" y1="271.9" x2="812.4" y2="279.9"/><line x1="1016.8" y1="271.9" x2="1016.8" y2="279.9"/></g><g fill="#979797" font-size="12.5" text-anchor="middle"><text x="798.5" y="253.5">80</text><text x="914.5" y="253.5">600</text><text x="799.5" y="271.3">75</text><text x="914.5" y="271.3">600</text><text x="802" y="289.5">60</text><text x="914.5" y="289.5">600</text></g><circle cx="896.5" cy="211.3" r="8.6" fill="#fff" stroke="#3a3a3a" stroke-width="1"/><text x="896.5" y="215.70000000000002" text-anchor="middle" font-size="12.3" fill="#222">1</text><circle cx="914.3" cy="198.5" r="8.6" fill="#fff" stroke="#3a3a3a" stroke-width="1"/><text x="914.3" y="202.9" text-anchor="middle" font-size="12.3" fill="#222">2</text><circle cx="932.4" cy="188.5" r="8.6" fill="#fff" stroke="#3a3a3a" stroke-width="1"/><text x="932.4" y="192.9" text-anchor="middle" font-size="12.3" fill="#222">3</text><circle cx="950.2" cy="181.6" r="8.6" fill="#fff" stroke="#3a3a3a" stroke-width="1"/><text x="950.2" y="186.0" text-anchor="middle" font-size="12.3" fill="#222">4</text><circle cx="950" cy="147.8" r="8.6" fill="#fff" stroke="#3a3a3a" stroke-width="1"/><text x="950" y="152.20000000000002" text-anchor="middle" font-size="12.3" fill="#222">5</text><circle cx="950" cy="110.3" r="8.6" fill="#fff" stroke="#3a3a3a" stroke-width="1"/><text x="950" y="114.7" text-anchor="middle" font-size="12.3" fill="#222">6</text><circle cx="968.2" cy="94.9" r="8.6" fill="#fff" stroke="#3a3a3a" stroke-width="1"/><text x="968.2" y="99.30000000000001" text-anchor="middle" font-size="12.3" fill="#222">7</text><circle cx="986" cy="90.8" r="8.6" fill="#fff" stroke="#3a3a3a" stroke-width="1"/><text x="986" y="95.2" text-anchor="middle" font-size="12.3" fill="#222">8</text><circle cx="1004.1" cy="86.1" r="8.6" fill="#fff" stroke="#3a3a3a" stroke-width="1"/><text x="1004.1" y="90.5" text-anchor="middle" font-size="12.3" fill="#222">9</text><g fill="none" stroke="#9a9a9a" stroke-width="0.8"><polyline points="1070,85.8 1094,85.8 1116.5,19.4"/><polyline points="1071,91.2 1094,91.2 1116.5,41"/><polyline points="1071,95.8 1094,95.8 1116.5,62.6"/><polyline points="1031.6,105.3 1037.5,102.7 1094,102.7 1116.5,84.2"/><polyline points="1071,106 1094,106 1116.5,105.8"/><polyline points="1036,127.2 1094,127.2 1116.5,127.4"/><polyline points="1071,148.8 1094,148.8 1116.5,149"/><polyline points="1037,180.2 1094,180.2 1116.5,170.6"/><polyline points="1070.5,183.1 1094,183.1 1116.5,192.2"/><polyline points="1070.5,188.5 1094,188.5 1116.5,213.8"/><polyline points="1038,201 1094,201 1116.5,235.4"/><polyline points="1070.5,203.7 1094,203.7 1116.5,257"/><polyline points="1070.5,211.6 1094,211.6 1116.5,278.6"/></g><g fill="#333"><rect x="1069.7" y="85.3" width="1.3" height="1"/><rect x="1070.7" y="90.7" width="1.3" height="1"/><rect x="1070.7" y="95.3" width="1.3" height="1"/><rect x="1031.3" y="104.8" width="1.3" height="1"/><rect x="1070.7" y="105.5" width="1.3" height="1"/><rect x="1035.7" y="126.7" width="1.3" height="1"/><rect x="1070.7" y="148.3" width="1.3" height="1"/><rect x="1036.7" y="179.7" width="1.3" height="1"/><rect x="1070.2" y="182.6" width="1.3" height="1"/><rect x="1070.2" y="188.0" width="1.3" height="1"/><rect x="1037.7" y="200.5" width="1.3" height="1"/><rect x="1070.2" y="203.2" width="1.3" height="1"/><rect x="1070.2" y="211.1" width="1.3" height="1"/></g><g fill="#5f5f5f" font-size="12.5"><text x="1121.5" y="23.9">Luftschicht (ruhend) (24mm)</text><text x="1121.5" y="45.5">PYE-Bitumenschweißbahn</text><text x="1121.5" y="67.1">Eiche (24mm)</text><text x="1121.5" y="88.7">Fichte (60x60mm²)</text><text x="1121.5" y="110.3">STEICOflex 036 (60mm)</text><text x="1121.5" y="131.9">Fichte (160x75mm²)</text><text x="1121.5" y="153.5">STEICOflex 036 (160mm)</text><text x="1121.5" y="175.1">Fichte (40x75mm²)</text><text x="1121.5" y="196.7">STEICOflex 036 (40mm)</text><text x="1121.5" y="218.3">ISOVER Vario XtraSafe (0,2mm)</text><text x="1121.5" y="239.9">Fichte (60x80mm²)</text><text x="1121.5" y="261.5">Luft (ruhend)Inst.ebene (60mm)</text><text x="1121.5" y="283.1">Gipskartonplatte (12,5mm) (12,5mm)</text></g></svg><div class="a" style="left:0;top:446px;width:1357px;height:134px;background:linear-gradient(#555555,#474747);border-top:1px solid #202020"></div><svg class="a" style="left:0;top:446px" width="1357" height="134" viewBox="0 446 1357 134" font-family="Liberation Sans, sans-serif"><path d="M3 459.5 H14 L8.5 469.5 Z" fill="#eeeeee"/><text x="235.3" y="474.6" fill="#f0f0f0" font-size="18.5">U-Wert:</text><text x="304.5" y="474.6" fill="#f4f4f4" font-size="22.1">0,160</text><text x="366" y="474.3" fill="#e8e8e8" font-size="10.7">W/(m²K)</text><g transform="translate(432.5 468.8) rotate(-45)"><rect x="-1.3" y="-3" width="2.6" height="10" rx="1" fill="#a4a4a4"/><path d="M-4 -5.5 A4.3 4.3 0 1 0 4 -5.5 L2 -5.5 L2 -2.5 L-2 -2.5 L-2 -5.5 Z" fill="#a4a4a4"/></g><rect x="235" y="486" width="208" height="1" fill="#3c3c3c"/><rect x="442" y="486" width="1" height="11" fill="#858585"/><rect x="236" y="487" width="33" height="8" fill="#8bcb55"/><rect x="235" y="496" width="208" height="1" fill="#7a7a7a"/><defs><linearGradient id="g235_486" x1="0" x2="1" y1="0" y2="0"><stop offset="0" stop-color="#62a346"/><stop offset="0.21" stop-color="#62a346"/><stop offset="0.21" stop-color="#b51d1d"/><stop offset="1" stop-color="#b51d1d"/></linearGradient></defs><rect x="235" y="497.6" width="208" height="2.2" fill="url(#g235_486)"/><rect x="235" y="499.8" width="208" height="0.9" fill="#777"/><text x="235.3" y="517.3" fill="#f0f0f0" font-size="12">OIB-RL 6 (2011) U ≤ 0.2</text><rect x="369.7" y="504.3" width="13.8" height="14.1" fill="#c9c9c9"/><path d="M372.3 507.8 H381 L376.65 515.5 Z" fill="#555"/><text x="235.3" y="541" fill="#f0f0f0" font-size="12.2">Beitrag zum Treibhauseffekt:</text><rect x="235" y="545" width="208" height="1" fill="#3c3c3c"/><rect x="442" y="545" width="1" height="7.5" fill="#858585"/><rect x="236" y="546" width="2" height="4.5" fill="#8bcb55"/><rect x="235" y="551.5" width="208" height="1" fill="#7a7a7a"/><defs><linearGradient id="g235_545" x1="0" x2="1" y1="0" y2="0"><stop offset="0" stop-color="#62a346"/><stop offset="0.5" stop-color="#62a346"/><stop offset="0.72" stop-color="#d1b62a"/><stop offset="0.95" stop-color="#b51d1d"/><stop offset="1" stop-color="#b51d1d"/></linearGradient></defs><rect x="235" y="553.1" width="208" height="2.2" fill="url(#g235_545)"/><rect x="235" y="555.3" width="208" height="0.9" fill="#777"/><text x="235" y="572.3" fill="#bdbdbd" font-size="10.3">sehr gut</text><text x="443" y="572.3" fill="#bdbdbd" font-size="10.8" text-anchor="end">mangelhaft</text><text x="460.7" y="469" fill="#f0f0f0" font-size="12.4">Tauwasser: 0 kg/m²</text><rect x="460.5" y="473" width="207.5" height="1" fill="#3c3c3c"/><rect x="667" y="473" width="1" height="7.5" fill="#858585"/><rect x="461.5" y="474" width="2.5" height="4.5" fill="#8bcb55"/><rect x="460.5" y="479.5" width="207.5" height="1" fill="#7a7a7a"/><defs><linearGradient id="g460_473" x1="0" x2="1" y1="0" y2="0"><stop offset="0" stop-color="#62a346"/><stop offset="0.55" stop-color="#62a346"/><stop offset="0.78" stop-color="#d1b62a"/><stop offset="0.97" stop-color="#b51d1d"/><stop offset="1" stop-color="#b51d1d"/></linearGradient></defs><rect x="460.5" y="481.1" width="207.5" height="2.2" fill="url(#g460_473)"/><rect x="460.5" y="483.3" width="207.5" height="0.9" fill="#777"/><text x="460.7" y="504.8" fill="#f0f0f0" font-size="12.4">Holzfeuchte: +0,0 %</text><rect x="460.5" y="509" width="207.5" height="1" fill="#3c3c3c"/><rect x="667" y="509" width="1" height="7.5" fill="#858585"/><rect x="461.5" y="510" width="2.5" height="4.5" fill="#8bcb55"/><rect x="460.5" y="515.5" width="207.5" height="1" fill="#7a7a7a"/><defs><linearGradient id="g460_509" x1="0" x2="1" y1="0" y2="0"><stop offset="0" stop-color="#62a346"/><stop offset="0.22" stop-color="#62a346"/><stop offset="0.35" stop-color="#d1b62a"/><stop offset="0.5" stop-color="#b51d1d"/><stop offset="1" stop-color="#b51d1d"/></linearGradient></defs><rect x="460.5" y="517.1" width="207.5" height="2.2" fill="url(#g460_509)"/><rect x="460.5" y="519.3" width="207.5" height="0.9" fill="#777"/><text x="460.7" y="541" fill="#f0f0f0" font-size="12.4">Trocknungsdauer: -</text><rect x="460.5" y="545" width="207.5" height="1" fill="#3c3c3c"/><rect x="667" y="545" width="1" height="7.5" fill="#858585"/><rect x="461.5" y="546" width="2.5" height="4.5" fill="#8bcb55"/><rect x="460.5" y="551.5" width="207.5" height="1" fill="#7a7a7a"/><defs><linearGradient id="g460_545" x1="0" x2="1" y1="0" y2="0"><stop offset="0" stop-color="#62a346"/><stop offset="0.42" stop-color="#62a346"/><stop offset="0.68" stop-color="#d1b62a"/><stop offset="0.9" stop-color="#b51d1d"/><stop offset="1" stop-color="#b51d1d"/></linearGradient></defs><rect x="460.5" y="553.1" width="207.5" height="2.2" fill="url(#g460_545)"/><rect x="460.5" y="555.3" width="207.5" height="0.9" fill="#777"/><text x="460.5" y="572.3" fill="#bdbdbd" font-size="10.3">sehr gut</text><text x="668" y="572.3" fill="#bdbdbd" font-size="10.8" text-anchor="end">mangelhaft</text><text x="686.2" y="468.6" fill="#f0f0f0" font-size="12.35">sd-Wert: 73 m</text><text x="893.7" y="468.6" fill="#f0f0f0" font-size="12.3" text-anchor="end">Dicke: 38,37 cm</text><text x="893.7" y="484.7" fill="#f0f0f0" font-size="12.2" text-anchor="end">Gewicht: 64 kg/m²</text><text x="686.2" y="502.3" fill="#f0f0f0" font-size="12.3">Oberfläche innen: 19,8°C (51%)</text><rect x="686" y="507" width="208" height="1" fill="#3c3c3c"/><rect x="893" y="507" width="1" height="7.5" fill="#858585"/><rect x="687" y="508" width="101" height="4.5" fill="#8bcb55"/><rect x="686" y="513.5" width="208" height="1" fill="#7a7a7a"/><defs><linearGradient id="g686_507" x1="0" x2="1" y1="0" y2="0"><stop offset="0" stop-color="#b51d1d"/><stop offset="0.18" stop-color="#b51d1d"/><stop offset="0.28" stop-color="#d1b62a"/><stop offset="0.4" stop-color="#62a346"/><stop offset="1" stop-color="#62a346"/></linearGradient></defs><rect x="686" y="515.1" width="208" height="2.2" fill="url(#g686_507)"/><rect x="686" y="517.3" width="208" height="0.9" fill="#777"/><text x="686.2" y="538.5" fill="#f0f0f0" font-size="12.4">Trocknungsreserve: 213 g/m²a</text><rect x="686" y="543.5" width="208" height="1" fill="#3c3c3c"/><rect x="893" y="543.5" width="1" height="7.5" fill="#858585"/><rect x="687" y="544.5" width="88" height="4.5" fill="#d01414"/><rect x="686" y="550.0" width="208" height="1" fill="#7a7a7a"/><defs><linearGradient id="g686_543" x1="0" x2="1" y1="0" y2="0"><stop offset="0" stop-color="#b51d1d"/><stop offset="0.38" stop-color="#b51d1d"/><stop offset="0.5" stop-color="#d1b62a"/><stop offset="0.6" stop-color="#62a346"/><stop offset="1" stop-color="#62a346"/></linearGradient></defs><rect x="686" y="551.6" width="208" height="2.2" fill="url(#g686_543)"/><rect x="686" y="553.8" width="208" height="0.9" fill="#777"/><text x="686" y="570.3" fill="#bdbdbd" font-size="10.9">mangelhaft</text><text x="893.7" y="570.3" fill="#bdbdbd" font-size="10.5" text-anchor="end">sehr gut</text><text x="912.5" y="468.6" fill="#f0f0f0" font-size="12.1">Temp.Ampl.Dämpfung (1/TAV): 21,7</text><rect x="912" y="473.4" width="208" height="1" fill="#3c3c3c"/><rect x="1119" y="473.4" width="1" height="7.5" fill="#858585"/><rect x="913" y="474.4" width="207" height="4.5" fill="#8bcb55"/><rect x="912" y="479.9" width="208" height="1" fill="#7a7a7a"/><defs><linearGradient id="g912_473" x1="0" x2="1" y1="0" y2="0"><stop offset="0" stop-color="#b51d1d"/><stop offset="0.03" stop-color="#b51d1d"/><stop offset="0.2" stop-color="#d1b62a"/><stop offset="0.35" stop-color="#62a346"/><stop offset="1" stop-color="#62a346"/></linearGradient></defs><rect x="912" y="481.5" width="208" height="2.2" fill="url(#g912_473)"/><rect x="912" y="483.7" width="208" height="0.9" fill="#777"/><text x="912.5" y="504.5" fill="#f0f0f0" font-size="12.4">Phasenverschiebung: 14 h</text><rect x="912" y="509" width="208" height="1" fill="#3c3c3c"/><rect x="1119" y="509" width="1" height="7.5" fill="#858585"/><rect x="913" y="510" width="154" height="4.5" fill="#8bcb55"/><rect x="912" y="515.5" width="208" height="1" fill="#7a7a7a"/><defs><linearGradient id="g912_509" x1="0" x2="1" y1="0" y2="0"><stop offset="0" stop-color="#b51d1d"/><stop offset="0.05" stop-color="#b51d1d"/><stop offset="0.22" stop-color="#d1b62a"/><stop offset="0.42" stop-color="#62a346"/><stop offset="1" stop-color="#62a346"/></linearGradient></defs><rect x="912" y="517.1" width="208" height="2.2" fill="url(#g912_509)"/><rect x="912" y="519.3" width="208" height="0.9" fill="#777"/><text x="912.5" y="540.3" fill="#f0f0f0" font-size="12.3">Speicherfähigkeit innen: 41 kJ/m²K</text><rect x="912" y="545" width="208" height="1" fill="#3c3c3c"/><rect x="1119" y="545" width="1" height="7.5" fill="#858585"/><rect x="913" y="546" width="84" height="4.5" fill="#a9c93c"/><rect x="912" y="551.5" width="208" height="1" fill="#7a7a7a"/><defs><linearGradient id="g912_545" x1="0" x2="1" y1="0" y2="0"><stop offset="0" stop-color="#b51d1d"/><stop offset="0.03" stop-color="#b51d1d"/><stop offset="0.2" stop-color="#d1b62a"/><stop offset="0.38" stop-color="#62a346"/><stop offset="1" stop-color="#62a346"/></linearGradient></defs><rect x="912" y="553.1" width="208" height="2.2" fill="url(#g912_545)"/><rect x="912" y="555.3" width="208" height="0.9" fill="#777"/><text x="912.5" y="572.2" fill="#bdbdbd" font-size="10.9">mangelhaft</text><text x="1119.5" y="572.2" fill="#bdbdbd" font-size="10.5" text-anchor="end">sehr gut</text></svg></body></html>
